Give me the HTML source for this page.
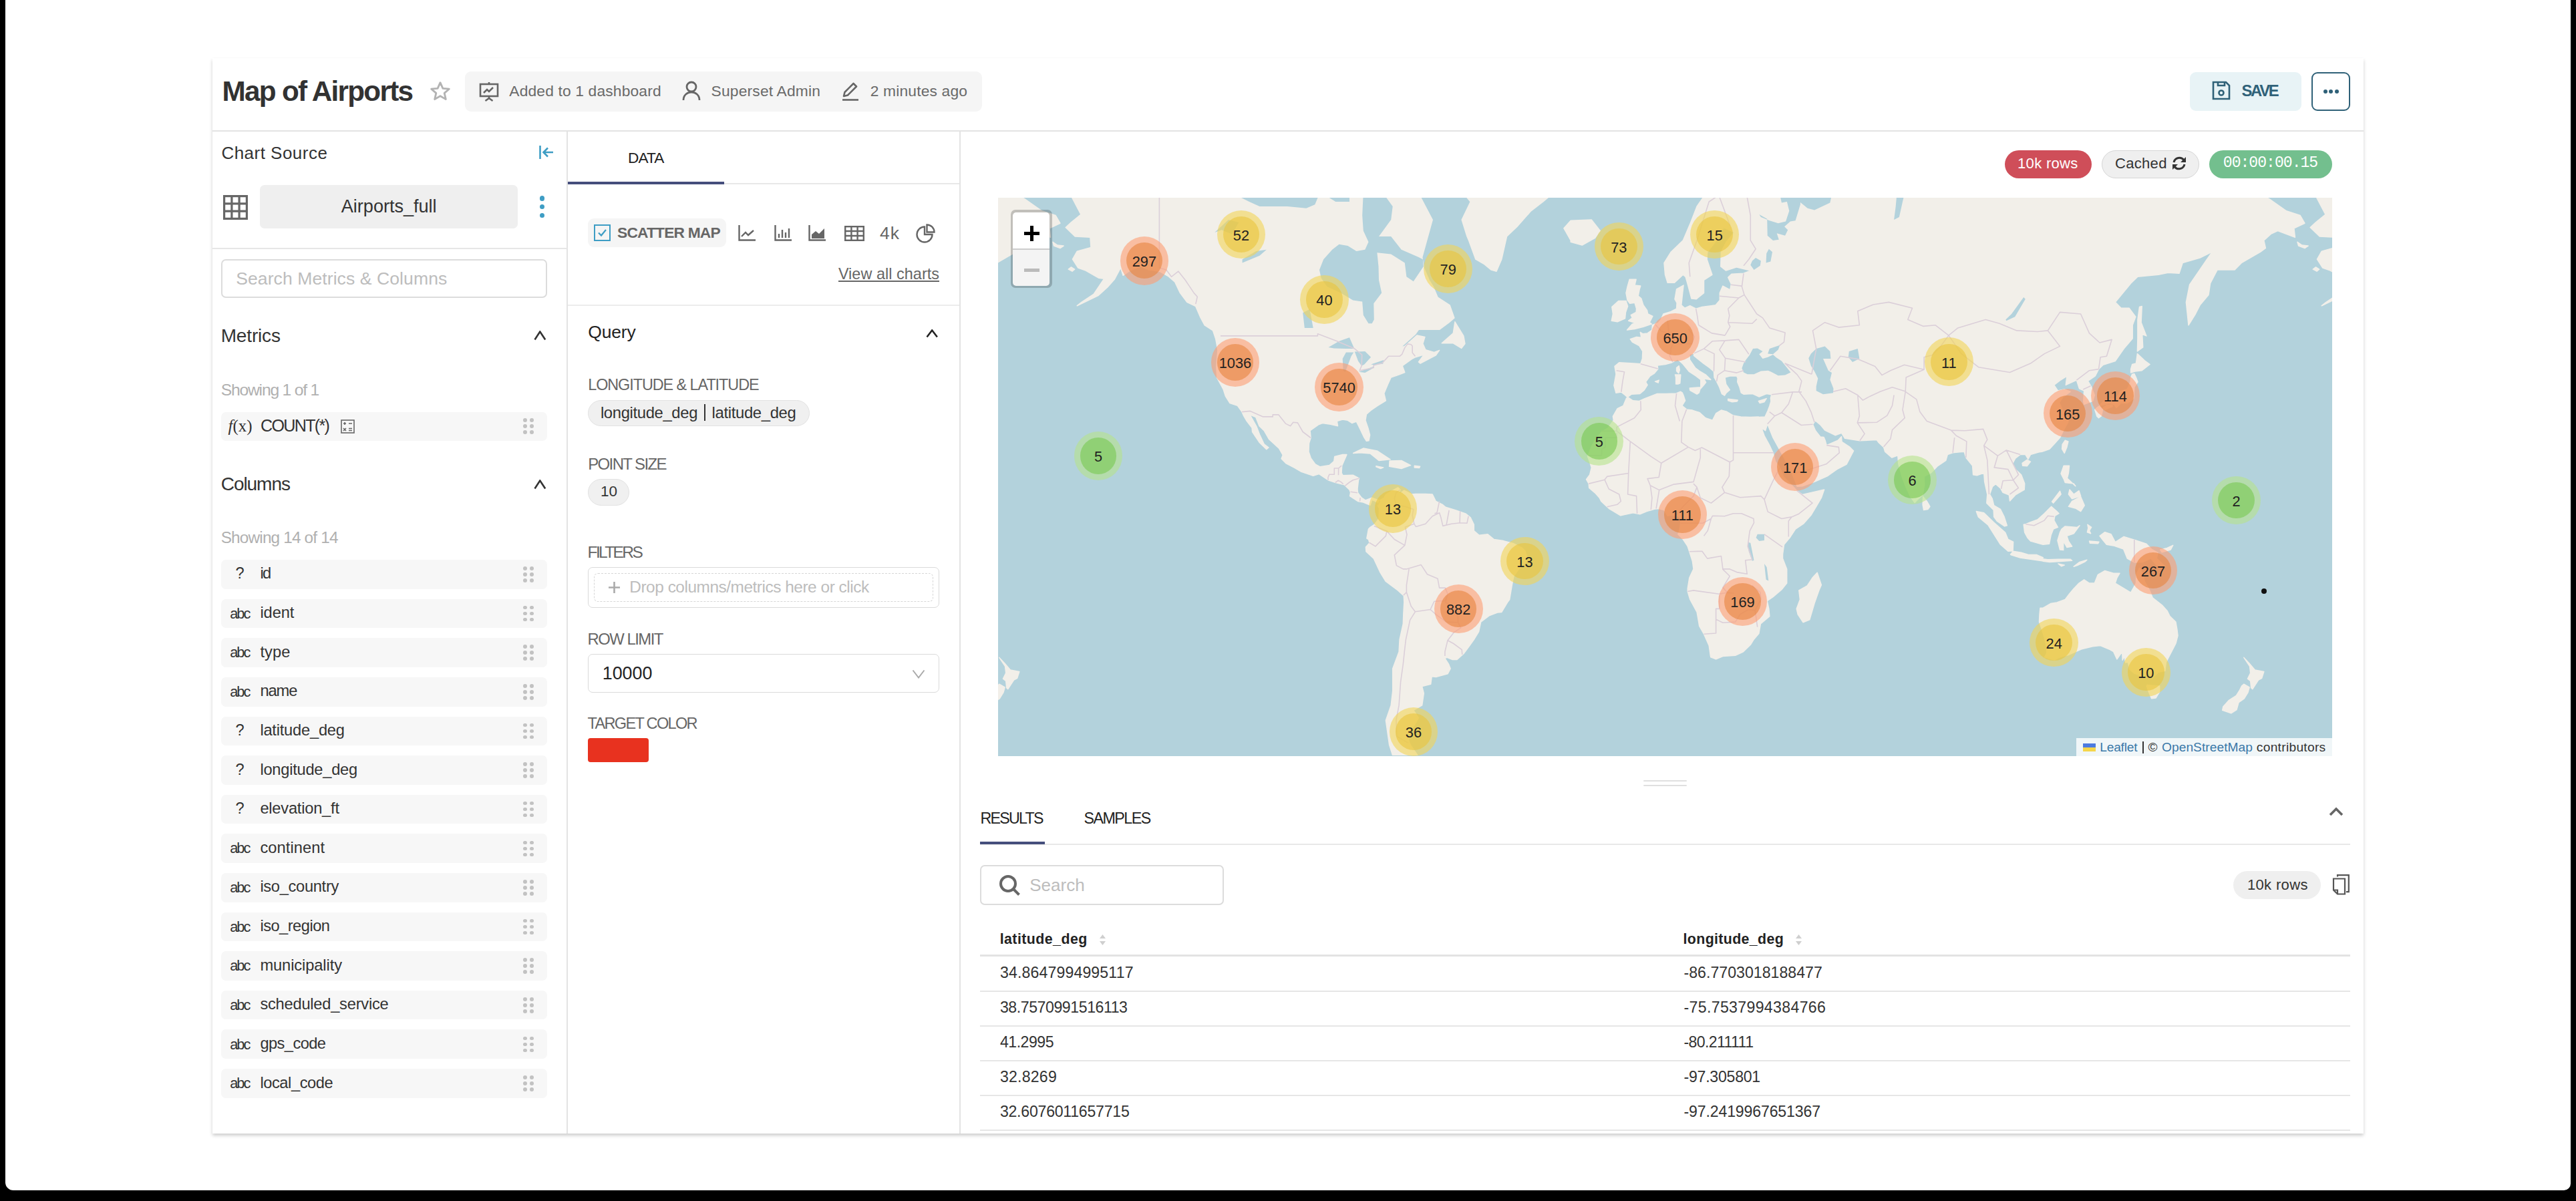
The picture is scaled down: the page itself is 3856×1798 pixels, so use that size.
<!DOCTYPE html><html><head><meta charset="utf-8"><style>
html,body{margin:0;padding:0;width:3856px;height:1798px;overflow:hidden;background:#000}
.r{position:absolute;display:block}
.t{position:absolute;white-space:nowrap;line-height:1;font-family:"Liberation Sans",sans-serif}
</style></head><body>
<div class="r" style="left:0;top:0;width:3856px;height:1798px;background:#000"></div>
<div class="r" style="left:8px;top:0;width:3840px;height:1782px;background:#fff;border-radius:0 0 10px 12px"></div>
<div class="r" style="left:318.0px;top:87.0px;width:3220.0px;height:1610.0px;background:#fff;box-shadow:0 3px 5px rgba(0,0,0,0.2)"></div>
<div class="r" style="left:318.0px;top:195.0px;width:3220.0px;height:2.0px;background:#e3e3e3"></div>
<div class="r" style="left:848.0px;top:196.0px;width:2.0px;height:1501.0px;background:#e3e3e3"></div>
<div class="r" style="left:1436.0px;top:196.0px;width:2.0px;height:1501.0px;background:#e3e3e3"></div>
<svg class="r" style="left:642px;top:120px" width="34" height="34" viewBox="0 0 24 24"><path d="M12 2.6l2.75 6.1 6.65.62-5.03 4.4 1.5 6.5L12 16.8l-5.87 3.42 1.5-6.5-5.03-4.4 6.65-.62z" fill="none" stroke="#b3b3b3" stroke-width="2" stroke-linejoin="round"/></svg>
<div class="r" style="left:695.5px;top:107.0px;width:774.9px;height:59.7px;background:#f5f5f5;border-radius:9px"></div>
<svg class="r" style="left:716px;top:121px" width="32" height="32" viewBox="0 0 32 32"><g fill="none" stroke="#666" stroke-width="2.6"><rect x="3" y="5" width="26" height="18"/><path d="M16 2v3M16 23v3M10.5 30l5.5-4 5.5 4M8 18l5-5 3 3 6-6"/></g></svg>
<svg class="r" style="left:1021px;top:121px" width="28" height="30" viewBox="0 0 28 30"><g fill="none" stroke="#666" stroke-width="2.8"><circle cx="14" cy="9" r="7"/><path d="M2 29c0-7 5-12 12-12s12 5 12 12"/></g></svg>
<svg class="r" style="left:1258px;top:121px" width="30" height="30" viewBox="0 0 30 30"><g fill="none" stroke="#666" stroke-width="2.6" stroke-linejoin="round"><path d="M5 23l1.5-6L19.5 4l4.5 4.5L11 21.5z"/><path d="M3 28.5h24"/></g></svg>
<div class="r" style="left:3278.0px;top:107.6px;width:167.0px;height:58.1px;background:#e8f3f6;border-radius:9px"></div>
<svg class="r" style="left:3311px;top:121px" width="28" height="29" viewBox="0 0 28 29"><g fill="none" stroke="#2f6178" stroke-width="2.6"><path d="M2 2h19l5 5v20H2z"/><path d="M9 2v5h10V2"/><circle cx="14" cy="18" r="3.5"/></g></svg>
<div class="r" style="left:3460.0px;top:108.0px;width:58.0px;height:57.7px;border:2px solid #2f6178;border-radius:9px;box-sizing:border-box"></div>
<div class="r" style="left:3477.5px;top:134px;width:6px;height:6px;border-radius:3px;background:#2f6178"></div>
<div class="r" style="left:3486.2px;top:134px;width:6px;height:6px;border-radius:3px;background:#2f6178"></div>
<div class="r" style="left:3495.0px;top:134px;width:6px;height:6px;border-radius:3px;background:#2f6178"></div>
<svg class="r" style="left:806px;top:217px" width="24" height="22" viewBox="0 0 24 22"><g fill="none" stroke="#3e9dc4" stroke-width="2.6"><path d="M2.5 1v20"/><path d="M22 11H8M14 4.5L7.5 11l6.5 6.5"/></g></svg>
<svg class="r" style="left:334px;top:292px" width="37" height="37" viewBox="0 0 37 37"><g fill="none" stroke="#666" stroke-width="3.2"><rect x="1.6" y="1.6" width="33.8" height="33.8"/><path d="M12.9 1.6v33.8M24.1 1.6v33.8M1.6 12.9h33.8M1.6 24.1h33.8"/></g></svg>
<div class="r" style="left:388.7px;top:277.0px;width:386.3px;height:64.8px;background:#efefef;border-radius:7px"></div>
<div class="r" style="left:807.7px;top:293.0px;width:7.6px;height:7.6px;border-radius:4px;background:#3e9dc4"></div>
<div class="r" style="left:807.7px;top:305.8px;width:7.6px;height:7.6px;border-radius:4px;background:#3e9dc4"></div>
<div class="r" style="left:807.7px;top:318.9px;width:7.6px;height:7.6px;border-radius:4px;background:#3e9dc4"></div>
<div class="r" style="left:318.0px;top:371.0px;width:531.0px;height:2.0px;background:#e6e6e6"></div>
<div class="r" style="left:330.7px;top:387.9px;width:488.0px;height:57.8px;border:2px solid #dcdcdc;border-radius:7px;box-sizing:border-box"></div>
<svg class="r" style="left:798.7px;top:495.0px" width="18.7" height="15.0" viewBox="0 0 18.7 15.0"><path d="M1.5 13.5L9.3 1.5L17.2 13.5" fill="none" stroke="#333" stroke-width="2.6"/></svg>
<div class="r" style="left:330.7px;top:616.6px;width:488.3px;height:43.4px;background:#f7f7f7;border-radius:7px"></div>
<svg class="r" style="left:510px;top:628px" width="21" height="21" viewBox="0 0 21 21"><g fill="none" stroke="#666" stroke-width="1.6"><rect x="1" y="1" width="19" height="19"/><path d="M4 6h4M6 4v4M12 6h5M4 13l4 4M8 13l-4 4M12 13.5h5M12 16.5h5"/></g></svg>
<div class="r" style="left:783.2px;top:626.2px;width:5.6px;height:5.6px;border-radius:3px;background:#c2c2c2"></div><div class="r" style="left:783.2px;top:635.2px;width:5.6px;height:5.6px;border-radius:3px;background:#c2c2c2"></div><div class="r" style="left:783.2px;top:644.2px;width:5.6px;height:5.6px;border-radius:3px;background:#c2c2c2"></div><div class="r" style="left:793.0px;top:626.2px;width:5.6px;height:5.6px;border-radius:3px;background:#c2c2c2"></div><div class="r" style="left:793.0px;top:635.2px;width:5.6px;height:5.6px;border-radius:3px;background:#c2c2c2"></div><div class="r" style="left:793.0px;top:644.2px;width:5.6px;height:5.6px;border-radius:3px;background:#c2c2c2"></div>
<svg class="r" style="left:798.7px;top:718.0px" width="18.7" height="15.0" viewBox="0 0 18.7 15.0"><path d="M1.5 13.5L9.3 1.5L17.2 13.5" fill="none" stroke="#333" stroke-width="2.6"/></svg>
<div class="r" style="left:330.5px;top:838.0px;width:488.3px;height:43.7px;background:#f7f7f7;border-radius:7px"></div>
<div class="r" style="left:783.2px;top:848.2px;width:5.6px;height:5.6px;border-radius:3px;background:#c2c2c2"></div><div class="r" style="left:783.2px;top:857.2px;width:5.6px;height:5.6px;border-radius:3px;background:#c2c2c2"></div><div class="r" style="left:783.2px;top:866.2px;width:5.6px;height:5.6px;border-radius:3px;background:#c2c2c2"></div><div class="r" style="left:793.0px;top:848.2px;width:5.6px;height:5.6px;border-radius:3px;background:#c2c2c2"></div><div class="r" style="left:793.0px;top:857.2px;width:5.6px;height:5.6px;border-radius:3px;background:#c2c2c2"></div><div class="r" style="left:793.0px;top:866.2px;width:5.6px;height:5.6px;border-radius:3px;background:#c2c2c2"></div>
<div class="r" style="left:330.5px;top:896.6px;width:488.3px;height:43.7px;background:#f7f7f7;border-radius:7px"></div>
<div class="r" style="left:783.2px;top:906.8px;width:5.6px;height:5.6px;border-radius:3px;background:#c2c2c2"></div><div class="r" style="left:783.2px;top:915.8px;width:5.6px;height:5.6px;border-radius:3px;background:#c2c2c2"></div><div class="r" style="left:783.2px;top:924.8px;width:5.6px;height:5.6px;border-radius:3px;background:#c2c2c2"></div><div class="r" style="left:793.0px;top:906.8px;width:5.6px;height:5.6px;border-radius:3px;background:#c2c2c2"></div><div class="r" style="left:793.0px;top:915.8px;width:5.6px;height:5.6px;border-radius:3px;background:#c2c2c2"></div><div class="r" style="left:793.0px;top:924.8px;width:5.6px;height:5.6px;border-radius:3px;background:#c2c2c2"></div>
<div class="r" style="left:330.5px;top:955.2px;width:488.3px;height:43.7px;background:#f7f7f7;border-radius:7px"></div>
<div class="r" style="left:783.2px;top:965.4px;width:5.6px;height:5.6px;border-radius:3px;background:#c2c2c2"></div><div class="r" style="left:783.2px;top:974.4px;width:5.6px;height:5.6px;border-radius:3px;background:#c2c2c2"></div><div class="r" style="left:783.2px;top:983.4px;width:5.6px;height:5.6px;border-radius:3px;background:#c2c2c2"></div><div class="r" style="left:793.0px;top:965.4px;width:5.6px;height:5.6px;border-radius:3px;background:#c2c2c2"></div><div class="r" style="left:793.0px;top:974.4px;width:5.6px;height:5.6px;border-radius:3px;background:#c2c2c2"></div><div class="r" style="left:793.0px;top:983.4px;width:5.6px;height:5.6px;border-radius:3px;background:#c2c2c2"></div>
<div class="r" style="left:330.5px;top:1013.9px;width:488.3px;height:43.7px;background:#f7f7f7;border-radius:7px"></div>
<div class="r" style="left:783.2px;top:1024.1px;width:5.6px;height:5.6px;border-radius:3px;background:#c2c2c2"></div><div class="r" style="left:783.2px;top:1033.1px;width:5.6px;height:5.6px;border-radius:3px;background:#c2c2c2"></div><div class="r" style="left:783.2px;top:1042.1px;width:5.6px;height:5.6px;border-radius:3px;background:#c2c2c2"></div><div class="r" style="left:793.0px;top:1024.1px;width:5.6px;height:5.6px;border-radius:3px;background:#c2c2c2"></div><div class="r" style="left:793.0px;top:1033.1px;width:5.6px;height:5.6px;border-radius:3px;background:#c2c2c2"></div><div class="r" style="left:793.0px;top:1042.1px;width:5.6px;height:5.6px;border-radius:3px;background:#c2c2c2"></div>
<div class="r" style="left:330.5px;top:1072.5px;width:488.3px;height:43.7px;background:#f7f7f7;border-radius:7px"></div>
<div class="r" style="left:783.2px;top:1082.7px;width:5.6px;height:5.6px;border-radius:3px;background:#c2c2c2"></div><div class="r" style="left:783.2px;top:1091.7px;width:5.6px;height:5.6px;border-radius:3px;background:#c2c2c2"></div><div class="r" style="left:783.2px;top:1100.7px;width:5.6px;height:5.6px;border-radius:3px;background:#c2c2c2"></div><div class="r" style="left:793.0px;top:1082.7px;width:5.6px;height:5.6px;border-radius:3px;background:#c2c2c2"></div><div class="r" style="left:793.0px;top:1091.7px;width:5.6px;height:5.6px;border-radius:3px;background:#c2c2c2"></div><div class="r" style="left:793.0px;top:1100.7px;width:5.6px;height:5.6px;border-radius:3px;background:#c2c2c2"></div>
<div class="r" style="left:330.5px;top:1131.1px;width:488.3px;height:43.7px;background:#f7f7f7;border-radius:7px"></div>
<div class="r" style="left:783.2px;top:1141.3px;width:5.6px;height:5.6px;border-radius:3px;background:#c2c2c2"></div><div class="r" style="left:783.2px;top:1150.3px;width:5.6px;height:5.6px;border-radius:3px;background:#c2c2c2"></div><div class="r" style="left:783.2px;top:1159.3px;width:5.6px;height:5.6px;border-radius:3px;background:#c2c2c2"></div><div class="r" style="left:793.0px;top:1141.3px;width:5.6px;height:5.6px;border-radius:3px;background:#c2c2c2"></div><div class="r" style="left:793.0px;top:1150.3px;width:5.6px;height:5.6px;border-radius:3px;background:#c2c2c2"></div><div class="r" style="left:793.0px;top:1159.3px;width:5.6px;height:5.6px;border-radius:3px;background:#c2c2c2"></div>
<div class="r" style="left:330.5px;top:1189.7px;width:488.3px;height:43.7px;background:#f7f7f7;border-radius:7px"></div>
<div class="r" style="left:783.2px;top:1199.9px;width:5.6px;height:5.6px;border-radius:3px;background:#c2c2c2"></div><div class="r" style="left:783.2px;top:1208.9px;width:5.6px;height:5.6px;border-radius:3px;background:#c2c2c2"></div><div class="r" style="left:783.2px;top:1217.9px;width:5.6px;height:5.6px;border-radius:3px;background:#c2c2c2"></div><div class="r" style="left:793.0px;top:1199.9px;width:5.6px;height:5.6px;border-radius:3px;background:#c2c2c2"></div><div class="r" style="left:793.0px;top:1208.9px;width:5.6px;height:5.6px;border-radius:3px;background:#c2c2c2"></div><div class="r" style="left:793.0px;top:1217.9px;width:5.6px;height:5.6px;border-radius:3px;background:#c2c2c2"></div>
<div class="r" style="left:330.5px;top:1248.3px;width:488.3px;height:43.7px;background:#f7f7f7;border-radius:7px"></div>
<div class="r" style="left:783.2px;top:1258.5px;width:5.6px;height:5.6px;border-radius:3px;background:#c2c2c2"></div><div class="r" style="left:783.2px;top:1267.5px;width:5.6px;height:5.6px;border-radius:3px;background:#c2c2c2"></div><div class="r" style="left:783.2px;top:1276.5px;width:5.6px;height:5.6px;border-radius:3px;background:#c2c2c2"></div><div class="r" style="left:793.0px;top:1258.5px;width:5.6px;height:5.6px;border-radius:3px;background:#c2c2c2"></div><div class="r" style="left:793.0px;top:1267.5px;width:5.6px;height:5.6px;border-radius:3px;background:#c2c2c2"></div><div class="r" style="left:793.0px;top:1276.5px;width:5.6px;height:5.6px;border-radius:3px;background:#c2c2c2"></div>
<div class="r" style="left:330.5px;top:1307.0px;width:488.3px;height:43.7px;background:#f7f7f7;border-radius:7px"></div>
<div class="r" style="left:783.2px;top:1317.2px;width:5.6px;height:5.6px;border-radius:3px;background:#c2c2c2"></div><div class="r" style="left:783.2px;top:1326.2px;width:5.6px;height:5.6px;border-radius:3px;background:#c2c2c2"></div><div class="r" style="left:783.2px;top:1335.2px;width:5.6px;height:5.6px;border-radius:3px;background:#c2c2c2"></div><div class="r" style="left:793.0px;top:1317.2px;width:5.6px;height:5.6px;border-radius:3px;background:#c2c2c2"></div><div class="r" style="left:793.0px;top:1326.2px;width:5.6px;height:5.6px;border-radius:3px;background:#c2c2c2"></div><div class="r" style="left:793.0px;top:1335.2px;width:5.6px;height:5.6px;border-radius:3px;background:#c2c2c2"></div>
<div class="r" style="left:330.5px;top:1365.6px;width:488.3px;height:43.7px;background:#f7f7f7;border-radius:7px"></div>
<div class="r" style="left:783.2px;top:1375.8px;width:5.6px;height:5.6px;border-radius:3px;background:#c2c2c2"></div><div class="r" style="left:783.2px;top:1384.8px;width:5.6px;height:5.6px;border-radius:3px;background:#c2c2c2"></div><div class="r" style="left:783.2px;top:1393.8px;width:5.6px;height:5.6px;border-radius:3px;background:#c2c2c2"></div><div class="r" style="left:793.0px;top:1375.8px;width:5.6px;height:5.6px;border-radius:3px;background:#c2c2c2"></div><div class="r" style="left:793.0px;top:1384.8px;width:5.6px;height:5.6px;border-radius:3px;background:#c2c2c2"></div><div class="r" style="left:793.0px;top:1393.8px;width:5.6px;height:5.6px;border-radius:3px;background:#c2c2c2"></div>
<div class="r" style="left:330.5px;top:1424.2px;width:488.3px;height:43.7px;background:#f7f7f7;border-radius:7px"></div>
<div class="r" style="left:783.2px;top:1434.4px;width:5.6px;height:5.6px;border-radius:3px;background:#c2c2c2"></div><div class="r" style="left:783.2px;top:1443.4px;width:5.6px;height:5.6px;border-radius:3px;background:#c2c2c2"></div><div class="r" style="left:783.2px;top:1452.4px;width:5.6px;height:5.6px;border-radius:3px;background:#c2c2c2"></div><div class="r" style="left:793.0px;top:1434.4px;width:5.6px;height:5.6px;border-radius:3px;background:#c2c2c2"></div><div class="r" style="left:793.0px;top:1443.4px;width:5.6px;height:5.6px;border-radius:3px;background:#c2c2c2"></div><div class="r" style="left:793.0px;top:1452.4px;width:5.6px;height:5.6px;border-radius:3px;background:#c2c2c2"></div>
<div class="r" style="left:330.5px;top:1482.8px;width:488.3px;height:43.7px;background:#f7f7f7;border-radius:7px"></div>
<div class="r" style="left:783.2px;top:1493.0px;width:5.6px;height:5.6px;border-radius:3px;background:#c2c2c2"></div><div class="r" style="left:783.2px;top:1502.0px;width:5.6px;height:5.6px;border-radius:3px;background:#c2c2c2"></div><div class="r" style="left:783.2px;top:1511.0px;width:5.6px;height:5.6px;border-radius:3px;background:#c2c2c2"></div><div class="r" style="left:793.0px;top:1493.0px;width:5.6px;height:5.6px;border-radius:3px;background:#c2c2c2"></div><div class="r" style="left:793.0px;top:1502.0px;width:5.6px;height:5.6px;border-radius:3px;background:#c2c2c2"></div><div class="r" style="left:793.0px;top:1511.0px;width:5.6px;height:5.6px;border-radius:3px;background:#c2c2c2"></div>
<div class="r" style="left:330.5px;top:1541.4px;width:488.3px;height:43.7px;background:#f7f7f7;border-radius:7px"></div>
<div class="r" style="left:783.2px;top:1551.6px;width:5.6px;height:5.6px;border-radius:3px;background:#c2c2c2"></div><div class="r" style="left:783.2px;top:1560.6px;width:5.6px;height:5.6px;border-radius:3px;background:#c2c2c2"></div><div class="r" style="left:783.2px;top:1569.6px;width:5.6px;height:5.6px;border-radius:3px;background:#c2c2c2"></div><div class="r" style="left:793.0px;top:1551.6px;width:5.6px;height:5.6px;border-radius:3px;background:#c2c2c2"></div><div class="r" style="left:793.0px;top:1560.6px;width:5.6px;height:5.6px;border-radius:3px;background:#c2c2c2"></div><div class="r" style="left:793.0px;top:1569.6px;width:5.6px;height:5.6px;border-radius:3px;background:#c2c2c2"></div>
<div class="r" style="left:330.5px;top:1600.1px;width:488.3px;height:43.7px;background:#f7f7f7;border-radius:7px"></div>
<div class="r" style="left:783.2px;top:1610.3px;width:5.6px;height:5.6px;border-radius:3px;background:#c2c2c2"></div><div class="r" style="left:783.2px;top:1619.3px;width:5.6px;height:5.6px;border-radius:3px;background:#c2c2c2"></div><div class="r" style="left:783.2px;top:1628.3px;width:5.6px;height:5.6px;border-radius:3px;background:#c2c2c2"></div><div class="r" style="left:793.0px;top:1610.3px;width:5.6px;height:5.6px;border-radius:3px;background:#c2c2c2"></div><div class="r" style="left:793.0px;top:1619.3px;width:5.6px;height:5.6px;border-radius:3px;background:#c2c2c2"></div><div class="r" style="left:793.0px;top:1628.3px;width:5.6px;height:5.6px;border-radius:3px;background:#c2c2c2"></div>
<div class="r" style="left:850.0px;top:274.0px;width:586.0px;height:2.0px;background:#e8e8e8"></div>
<div class="r" style="left:850.0px;top:271.5px;width:234.0px;height:4.3px;background:#454e7c"></div>
<div class="r" style="left:879.8px;top:326.9px;width:206.9px;height:43.5px;background:#f5f5f5;border-radius:9px"></div>
<div class="r" style="left:888.5px;top:336.3px;width:25.4px;height:24.7px;border:2.2px solid #3e9dc4;box-sizing:border-box"></div>
<svg class="r" style="left:888.5px;top:336.3px" width="25.4" height="24.7" viewBox="0 0 25.4 24.7"><path d="M7 12.5l4 4 7-8.5" fill="none" stroke="#3e9dc4" stroke-width="2.2"/></svg>
<svg class="r" style="left:1105px;top:337px" width="27" height="24" viewBox="0 0 27 24"><g fill="none" stroke="#666" stroke-width="2.4"><path d="M1.5 0v22.5H26"/><path d="M5 17l6-6 4 4 8-7"/></g></svg>
<svg class="r" style="left:1159px;top:337px" width="27" height="24" viewBox="0 0 27 24"><g fill="none" stroke="#666" stroke-width="2.4"><path d="M1.5 0v22.5H26"/><path d="M7 19v-6M12 19V7M17 19v-8M22 19V5"/></g></svg>
<svg class="r" style="left:1210px;top:337px" width="27" height="24" viewBox="0 0 27 24"><g fill="none" stroke="#666" stroke-width="2.4"><path d="M1.5 0v22.5H26"/></g><path d="M5 20V14l6-5 5 4 8-8v15z" fill="#666"/></svg>
<svg class="r" style="left:1264px;top:338px" width="30" height="23" viewBox="0 0 30 23"><g fill="none" stroke="#666" stroke-width="2.4"><rect x="1.2" y="1.2" width="27.6" height="20.6"/><path d="M1.2 8h27.6M1.2 15h27.6M10.4 1.2v20.6M19.6 1.2v20.6"/></g></svg>
<svg class="r" style="left:1371px;top:335px" width="30" height="29" viewBox="0 0 30 29"><g fill="none" stroke="#666" stroke-width="2.4"><path d="M13 4.5A11.5 11.5 0 1 0 24.5 16H13z"/><path d="M16.5 1.5v11h11A11 11 0 0 0 16.5 1.5z"/></g></svg>
<div class="r" style="left:1254.9px;top:420.4px;width:151.1px;height:2.0px;background:#666"></div>
<div class="r" style="left:850.0px;top:456.0px;width:586.0px;height:2.0px;background:#ececec"></div>
<svg class="r" style="left:1386.3px;top:493.0px" width="18.4" height="13.0" viewBox="0 0 18.4 13.0"><path d="M1.5 11.5L9.2 1.5L16.9 11.5" fill="none" stroke="#222" stroke-width="2.6"/></svg>
<div class="r" style="left:879.6px;top:598.7px;width:332.0px;height:39.6px;background:#f0f0f0;border:1.5px solid #e2e2e2;border-radius:20px;box-sizing:border-box"></div>
<div class="r" style="left:1054.0px;top:604.5px;width:2.3px;height:25.5px;background:#333"></div>
<div class="r" style="left:879.6px;top:716.7px;width:62.3px;height:39.9px;background:#f0f0f0;border:1.5px solid #e2e2e2;border-radius:20px;box-sizing:border-box"></div>
<div class="r" style="left:879.6px;top:849.4px;width:526.2px;height:60.8px;border:1.5px solid #dadada;border-radius:7px;box-sizing:border-box"></div>
<div class="r" style="left:888.7px;top:858.2px;width:508.3px;height:43.2px;border:1.6px dashed #d6d6d6;border-radius:6px;box-sizing:border-box"></div>
<svg class="r" style="left:910px;top:870px" width="19" height="19" viewBox="0 0 19 19"><path d="M9.5 1v17M1 9.5h17" stroke="#aaa" stroke-width="2.6"/></svg>
<div class="r" style="left:879.6px;top:979.4px;width:526.2px;height:57.5px;border:1.5px solid #dadada;border-radius:7px;box-sizing:border-box"></div>
<svg class="r" style="left:1365px;top:1002px" width="20" height="14" viewBox="0 0 20 14"><path d="M1.5 1.5L10 12.5 18.5 1.5" fill="none" stroke="#aaa" stroke-width="2"/></svg>
<div class="r" style="left:879.6px;top:1105.0px;width:91.3px;height:36.4px;background:#e8321f;border-radius:4px"></div>
<div class="r" style="left:3000.7px;top:225.0px;width:130.3px;height:41.7px;background:#cf4e59;border-radius:21px"></div>
<div class="r" style="left:3146.3px;top:225.0px;width:145.7px;height:41.7px;background:#efefef;border:1.5px solid #d6d6d6;border-radius:21px;box-sizing:border-box"></div>
<svg class="r" style="left:3251px;top:234px" width="22" height="21" viewBox="0 0 22 21"><g fill="none" stroke="#333" stroke-width="3"><path d="M3 9A8.5 8.5 0 0 1 18 5.5M19 12A8.5 8.5 0 0 1 4 15.5"/></g><path d="M21 1v8h-8z M1 20v-8h8z" fill="#333"/></svg>
<div class="r" style="left:3307.2px;top:225.0px;width:183.7px;height:41.7px;background:#73bf8e;border-radius:21px"></div>
<div class="r" style="left:1494px;top:296px;width:1997px;height:835.5px;overflow:hidden;background:#b3d2dc"><svg class="r" style="left:0;top:0" width="1997" height="835" viewBox="0 0 1997 835"><path d="M159.7,-36.3L132.8,-20.5L111.0,0.3L124.0,25.1L109.5,36.9L101.2,44.5L115.2,58.0L137.9,59.2L139.0,74.4L118.3,80.1L111.5,92.2L119.8,105.0L131.2,109.1L150.9,120.3L158.6,121.3L143.1,144.4L125.0,156.4L118.3,161.7L133.3,154.6L150.3,146.3L163.8,134.0L174.2,122.3L183.5,105.0L187.1,116.3L197.4,109.1L213.0,102.9L225.9,108.1L241.4,110.2L254.4,117.3L264.7,126.3L272.5,142.6L282.8,156.4L295.8,162.6L302.5,178.3L309.2,190.8L321.6,198.9L325.8,211.6L328.9,228.4L326.8,253.1L327.8,269.7L337.2,287.0L340.3,296.8L347.0,307.6L358.4,311.3L365.1,320.6L367.7,326.7L372.4,334.5L380.1,344.6L380.6,350.5L391.0,366.1L401.8,376.8L405.0,374.0L398.2,368.9L391.5,354.6L386.8,342.3L377.0,324.9L385.8,328.5L391.0,341.7L398.2,348.7L405.5,361.5L420.5,375.1L426.2,385.2L424.1,390.7L431.3,397.9L443.8,404.4L454.1,410.4L471.7,416.3L480.5,413.6L494.0,422.7L505.3,426.5L518.3,429.7L526.0,437.1L527.6,441.3L526.6,446.6L538.5,454.5L546.8,456.0L557.1,460.2L559.7,452.4L567.4,455.5L571.1,457.6L570.6,453.4L559.7,449.2L549.9,452.9L544.2,449.2L538.5,441.8L538.0,436.0L539.5,422.7L540.5,420.1L531.2,415.2L516.2,415.8L514.1,412.0L514.7,401.2L518.3,392.9L521.9,384.6L515.7,384.6L503.8,387.4L502.8,394.6L496.0,400.6L482.1,402.8L474.8,399.0L468.1,389.6L465.0,380.2L465.5,367.8L468.1,359.2L467.1,348.7L479.5,339.9L485.7,337.5L497.6,339.3L508.5,341.7L507.4,334.5L515.7,332.1L523.5,333.3L529.7,337.5L536.4,335.1L542.6,347.6L547.8,358.6L551.4,364.3L555.0,363.8L556.6,355.1L554.0,345.2L549.9,333.3L551.4,324.3L557.6,318.7L567.4,311.9L580.4,303.8L577.8,292.9L583.0,280.4L588.2,269.0L598.5,265.6L608.8,261.5L605.2,251.7L619.2,241.6L624.9,238.7L637.3,235.1L629.5,246.0L632.1,248.1L655.4,235.8L660.6,228.4L652.8,231.4L639.9,227.6L635.8,218.6L638.9,208.5L627.0,206.1L608.8,222.4L602.6,223.9L624.4,204.5L629.5,197.3L660.6,197.3L675.1,186.7L682.9,179.9L676.1,160.8L658.0,149.1L651.3,133.1L645.1,123.3L637.3,105.0L634.7,89.0L650.2,33.0L624.4,-16.0L598.5,-56.3L583.0,-223.8L91.3,-223.8L159.7,-223.8ZM2022.7,-36.3L1995.8,-20.5L1974.0,0.3L1987.0,25.1L1972.5,36.9L1964.2,44.5L1978.2,58.0L2000.9,59.2L2002.0,74.4L1981.3,80.1L1974.5,92.2L1982.8,105.0L1994.2,109.1L2013.9,120.3L2021.6,121.3L2006.1,144.4L1988.0,156.4L1981.3,161.7L1996.3,154.6L2013.3,146.3L2026.8,134.0L2037.1,122.3L2046.5,105.0L2050.1,116.3L2060.4,109.1L2076.0,102.9L2088.9,108.1L2104.4,110.2L2117.4,117.3L2127.7,126.3L2135.5,142.6L2145.8,156.4L2158.8,162.6L2165.5,178.3L2172.2,190.8L2184.6,198.9L2188.8,211.6L2191.9,228.4L2189.8,253.1L2190.8,269.7L2200.2,287.0L2203.3,296.8L2210.0,307.6L2221.4,311.3L2228.1,320.6L2230.7,326.7L2235.4,334.5L2243.1,344.6L2243.6,350.5L2254.0,366.1L2264.8,376.8L2268.0,374.0L2261.2,368.9L2254.5,354.6L2249.8,342.3L2240.0,324.9L2248.8,328.5L2254.0,341.7L2261.2,348.7L2268.5,361.5L2283.5,375.1L2289.2,385.2L2287.1,390.7L2294.3,397.9L2306.8,404.4L2317.1,410.4L2334.7,416.3L2343.5,413.6L2357.0,422.7L2368.3,426.5L2381.3,429.7L2389.1,437.1L2390.6,441.3L2389.6,446.6L2401.5,454.5L2409.8,456.0L2420.1,460.2L2422.7,452.4L2430.4,455.5L2434.1,457.6L2433.6,453.4L2422.7,449.2L2412.9,452.9L2407.2,449.2L2401.5,441.8L2401.0,436.0L2402.5,422.7L2403.5,420.1L2394.2,415.2L2379.2,415.8L2377.1,412.0L2377.7,401.2L2381.3,392.9L2384.9,384.6L2378.7,384.6L2366.8,387.4L2365.8,394.6L2359.0,400.6L2345.1,402.8L2337.8,399.0L2331.1,389.6L2328.0,380.2L2328.5,367.8L2331.1,359.2L2330.1,348.7L2342.5,339.9L2348.7,337.5L2360.6,339.3L2371.5,341.7L2370.4,334.5L2378.7,332.1L2386.5,333.3L2392.7,337.5L2399.4,335.1L2405.6,347.6L2410.8,358.6L2414.4,364.3L2418.0,363.8L2419.6,355.1L2417.0,345.2L2412.9,333.3L2414.4,324.3L2420.6,318.7L2430.4,311.9L2443.4,303.8L2440.8,292.9L2446.0,280.4L2451.1,269.0L2461.5,265.6L2471.8,261.5L2468.2,251.7L2482.2,241.6L2487.9,238.7L2500.3,235.1L2492.6,246.0L2495.1,248.1L2518.4,235.8L2523.6,228.4L2515.8,231.4L2502.9,227.6L2498.8,218.6L2501.9,208.5L2490.0,206.1L2471.8,222.4L2465.6,223.9L2487.4,204.5L2492.6,197.3L2523.6,197.3L2538.1,186.7L2545.9,179.9L2539.1,160.8L2521.0,149.1L2514.3,133.1L2508.1,123.3L2500.3,105.0L2497.7,89.0L2513.2,33.0L2487.4,-16.0L2461.5,-56.3L2446.0,-223.8L1954.3,-223.8L2022.7,-223.8ZM746.0,110.2L753.8,92.2L761.5,58.0L777.0,43.2L797.7,19.8L815.8,6.0L841.7,-16.0L867.6,-102.6L593.3,-169.4L681.3,-47.8L689.1,-16.0L707.2,6.0L694.2,33.0L702.0,58.0L704.6,63.9L714.9,92.2L727.9,99.7L738.2,108.1ZM857.2,63.9L846.9,45.7L857.2,34.3L888.3,33.0L901.2,49.5L893.5,60.4L874.3,71.0L857.2,66.3ZM571.1,453.4L577.8,449.2L580.4,444.5L587.1,440.3L598.5,433.9L602.1,437.1L600.1,444.0L607.8,438.2L619.2,444.0L624.9,443.4L639.9,443.4L650.2,444.0L655.4,454.5L665.8,459.7L669.9,463.3L685.4,468.0L700.4,473.2L707.2,478.9L712.3,489.3L712.3,498.6L720.1,505.3L733.0,503.8L742.4,511.5L756.3,513.6L771.9,517.8L784.8,524.5L788.9,528.7L791.0,535.4L790.0,545.4L779.6,555.9L771.9,566.5L769.3,579.8L765.7,601.5L762.5,605.9L753.8,620.4L747.5,621.0L735.6,625.5L722.7,635.1L719.6,649.6L712.3,661.5L704.6,672.3L696.8,682.8L687.0,691.5L680.3,691.5L672.0,688.4L668.9,689.6L674.6,698.5L677.2,705.0L673.0,712.8L655.4,717.4L649.2,716.8L647.7,728.2L634.7,731.6L637.3,742.0L634.7,759.9L621.8,767.3L629.5,778.6L620.2,794.3L614.0,810.5L617.1,818.9L632.1,840.8L624.4,859.4L598.5,859.4L585.6,818.9L580.4,782.5L588.2,759.9L590.7,738.5L590.7,718.1L590.7,705.0L600.1,679.7L601.1,661.5L606.3,638.0L606.8,624.3L607.8,605.4L607.3,596.0L598.5,587.9L580.4,574.5L572.1,561.2L562.3,540.1L550.9,529.7L550.4,522.9L556.1,516.7L554.5,511.5L551.9,510.0L554.5,496.0L557.1,493.4L563.3,489.3L570.0,480.5L570.6,464.9L568.0,460.7ZM940.6,300.0L935.9,311.3L927.1,315.7L920.4,327.3L921.4,333.3L913.1,344.6L903.8,350.5L896.1,359.2L888.3,372.3L882.6,387.4L885.7,395.7L888.3,403.9L885.7,414.7L880.5,421.7L884.2,428.1L884.7,434.5L893.5,441.8L900.2,449.2L902.8,454.5L911.6,462.8L915.2,465.9L931.8,475.8L950.4,471.7L960.8,473.7L971.1,469.6L984.0,465.9L988.7,465.4L997.0,467.5L1002.2,476.3L1009.9,475.3L1015.1,475.3L1020.3,478.4L1021.8,485.7L1020.8,493.4L1019.2,501.2L1017.7,503.8L1025.4,511.5L1032.2,521.9L1034.8,529.7L1039.4,544.3L1041.0,555.9L1034.8,569.1L1032.2,585.2L1032.2,589.5L1035.8,601.5L1046.1,620.4L1049.8,641.5L1056.5,653.2L1064.2,670.5L1066.3,685.3L1066.8,687.8L1074.6,690.9L1084.9,686.5L1103.6,685.3L1115.5,679.7L1126.3,669.3L1131.5,660.9L1138.8,652.6L1141.4,638.0L1154.8,626.6L1153.8,615.4L1151.2,603.7L1160.0,597.7L1172.9,586.8L1180.7,577.1L1180.7,555.9L1174.5,540.1L1174.5,533.9L1176.5,519.3L1185.9,507.9L1193.6,496.0L1205.5,488.2L1216.9,475.3L1224.7,462.3L1232.4,449.2L1236.6,437.1L1224.7,439.7L1204.0,444.5L1195.2,438.2L1191.0,433.4L1183.3,425.4L1175.5,417.4L1170.3,403.9L1163.6,395.1L1160.0,381.8L1154.8,370.6L1147.0,356.3L1139.8,336.3L1138.3,327.9L1125.8,328.5L1111.9,327.9L1100.5,326.1L1090.1,320.0L1082.4,318.1L1074.6,323.0L1069.4,333.3L1059.1,329.7L1050.3,321.8L1039.4,318.1L1030.6,316.9L1023.9,311.3L1028.5,303.8L1026.0,296.1L1024.4,292.2L1021.8,290.3L1015.1,292.9L999.6,293.5L986.6,293.5L968.0,300.6L959.7,304.4L950.4,303.8L943.7,299.3ZM-758.4,-33.1L-798.8,-12.9L-816.9,12.9L-827.2,39.4L-837.6,63.9L-855.7,81.2L-866.0,97.6L-864.5,115.3L-860.9,127.2L-850.5,127.2L-837.6,115.3L-833.9,118.3L-830.3,131.1L-825.1,150.9L-817.9,151.8L-806.5,142.6L-806.5,123.3L-794.1,115.3L-801.9,92.2L-801.3,81.2L-783.2,58.0L-777.0,44.5L-761.0,51.9L-772.9,66.3L-780.6,81.2L-781.2,102.9L-773.4,109.1L-757.4,103.9L-736.7,109.1L-747.0,113.3L-765.1,114.3L-770.3,119.3L-765.6,129.2L-767.2,137.8L-778.0,132.1L-782.7,142.6L-782.7,153.6L-788.9,160.8L-795.6,161.7L-809.1,163.5L-818.4,166.2L-827.2,161.7L-835.0,165.3L-840.2,160.8L-838.6,145.4L-837.0,131.1L-847.4,136.9L-850.0,151.8L-846.9,157.3L-847.4,166.2L-855.7,170.5L-867.1,174.0L-871.2,183.3L-874.8,187.5L-883.6,190.8L-884.1,198.1L-890.9,202.9L-898.1,203.7L-901.7,201.3L-900.2,209.3L-907.4,208.5L-916.7,211.6L-913.6,216.2L-903.3,221.6L-898.1,229.9L-898.6,240.9L-901.2,248.8L-911.6,248.1L-933.3,246.7L-940.0,252.4L-938.0,264.2L-941.1,281.1L-938.0,292.2L-930.2,290.9L-924.5,295.5L-920.9,298.7L-914.7,294.2L-902.2,293.5L-896.0,288.3L-890.9,280.4L-893.5,275.8L-887.2,267.0L-880.5,262.8L-875.3,256.6L-875.9,250.9L-864.0,249.5L-854.1,246.7L-845.8,241.6L-838.6,248.1L-828.8,260.1L-818.4,267.0L-811.2,272.4L-811.2,285.7L-806.0,279.8L-803.4,276.4L-806.5,271.0L-796.2,272.4L-803.9,264.9L-813.2,259.4L-819.5,254.5L-827.7,242.4L-828.2,234.3L-821.0,232.9L-821.5,236.5L-813.2,243.1L-807.0,248.1L-798.2,254.5L-791.5,260.1L-791.0,269.0L-787.4,275.1L-783.2,283.7L-779.6,293.5L-775.5,296.1L-772.9,292.2L-767.7,287.7L-773.4,279.1L-774.9,269.0L-767.7,267.0L-757.4,267.0L-755.8,270.4L-756.3,275.8L-753.2,283.1L-750.6,292.2L-747.0,294.2L-733.5,293.5L-723.7,298.0L-712.8,293.5L-705.1,294.8L-706.6,300.0L-706.1,305.0L-708.2,311.9L-710.8,318.7L-714.9,327.9L-724.7,328.5L-723.7,336.3L-720.1,344.6L-714.4,348.7L-711.3,338.7L-703.0,359.2L-689.0,384.6L-677.1,406.6L-670.4,422.7L-666.8,432.3L-659.0,431.8L-640.9,425.4L-621.8,416.9L-607.3,406.6L-592.8,399.0L-582.4,379.0L-588.6,372.9L-600.0,365.5L-600.5,357.4L-605.7,363.2L-622.8,370.6L-624.9,363.2L-626.9,358.6L-632.1,358.0L-639.4,348.7L-643.5,339.3L-639.4,333.9L-631.6,340.5L-625.4,348.1L-609.9,355.7L-600.5,352.2L-595.4,360.3L-573.1,363.8L-547.8,362.6L-545.2,366.1L-537.4,373.4L-535.3,380.2L-525.0,389.1L-516.2,385.7L-515.2,398.4L-510.0,417.4L-504.8,431.3L-497.6,447.1L-490.8,456.5L-487.2,452.4L-478.9,445.0L-476.3,430.2L-476.9,417.4L-466.0,411.5L-457.2,402.2L-444.3,393.5L-441.7,384.6L-433.9,381.8L-423.6,380.7L-416.8,380.2L-414.2,389.1L-404.4,401.2L-403.4,414.7L-397.7,415.8L-387.3,412.0L-386.3,425.4L-382.2,444.0L-383.2,457.1L-372.8,467.5L-372.3,477.9L-367.7,484.1L-356.3,491.9L-352.7,490.8L-356.8,477.9L-362.5,466.5L-372.3,460.7L-374.9,450.3L-378.5,444.0L-374.4,432.3L-369.7,428.6L-362.5,435.0L-358.9,441.3L-349.6,445.0L-348.5,453.9L-339.7,444.5L-326.8,437.1L-326.3,428.1L-331.4,414.7L-340.2,406.6L-344.9,399.0L-340.2,390.2L-333.0,384.6L-325.2,384.6L-321.1,391.3L-317.5,384.6L-304.5,380.7L-300.4,380.2L-289.0,376.2L-281.2,367.8L-273.5,359.2L-267.8,347.6L-261.1,335.7L-261.6,327.9L-268.3,320.6L-274.5,306.9L-269.3,298.7L-258.0,290.3L-266.8,287.0L-276.6,289.0L-282.3,280.4L-273.5,273.7L-263.1,267.0L-264.7,280.4L-248.6,273.1L-244.5,285.7L-237.3,289.0L-238.3,305.0L-237.3,309.4L-224.3,304.4L-221.7,295.5L-226.9,282.4L-231.6,274.4L-220.7,267.0L-215.5,256.6L-208.8,250.2L-190.7,244.5L-177.8,226.1L-164.8,210.8L-164.8,190.8L-160.2,178.3L-170.0,165.3L-181.9,165.3L-190.7,156.4L-167.4,128.2L-157.0,118.3L-126.0,115.3L-111.5,112.2L-95.0,113.3L-89.8,97.6L-63.9,90.0L-45.8,81.2L-79.4,130.2L-84.6,156.4L-81.0,190.8L-70.6,174.0L-63.9,160.8L-51.0,145.4L-48.4,128.2L-38.0,108.1L-12.2,108.1L-1.8,97.6L26.7,81.2L34.4,75.5L31.8,63.9L42.2,54.4L52.5,49.5L78.4,59.2L76.9,45.7L92.9,38.2L86.2,26.5L65.5,19.8L39.6,1.7L13.7,-12.9L-12.2,-16.0L-63.9,-12.9L-115.7,-31.5L-167.4,-47.8L-374.4,-145.4L-503.8,-47.8L-547.8,-16.0L-684.9,-16.0L-721.1,-16.0L-736.7,-23.6ZM1104.6,-33.1L1064.2,-12.9L1046.1,12.9L1035.8,39.4L1025.4,63.9L1007.3,81.2L997.0,97.6L998.5,115.3L1002.2,127.2L1012.5,127.2L1025.4,115.3L1029.1,118.3L1032.7,131.1L1037.9,150.9L1045.1,151.8L1056.5,142.6L1056.5,123.3L1068.9,115.3L1061.1,92.2L1061.7,81.2L1079.8,58.0L1086.0,44.5L1102.0,51.9L1090.1,66.3L1082.4,81.2L1081.8,102.9L1089.6,109.1L1105.7,103.9L1126.3,109.1L1116.0,113.3L1097.9,114.3L1092.7,119.3L1097.4,129.2L1095.8,137.8L1084.9,132.1L1080.3,142.6L1080.3,153.6L1074.1,160.8L1067.4,161.7L1053.9,163.5L1044.6,166.2L1035.8,161.7L1028.0,165.3L1022.8,160.8L1024.4,145.4L1026.0,131.1L1015.6,136.9L1013.0,151.8L1016.1,157.3L1015.6,166.2L1007.3,170.5L995.9,174.0L991.8,183.3L988.2,187.5L979.4,190.8L978.9,198.1L972.1,202.9L964.9,203.7L961.3,201.3L962.8,209.3L955.6,208.5L946.3,211.6L949.4,216.2L959.7,221.6L964.9,229.9L964.4,240.9L961.8,248.8L951.4,248.1L929.7,246.7L923.0,252.4L925.0,264.2L921.9,281.1L925.0,292.2L932.8,290.9L938.5,295.5L942.1,298.7L948.3,294.2L960.8,293.5L967.0,288.3L972.1,280.4L969.5,275.8L975.8,267.0L982.5,262.8L987.7,256.6L987.1,250.9L999.0,249.5L1008.9,246.7L1017.2,241.6L1024.4,248.1L1034.2,260.1L1044.6,267.0L1051.8,272.4L1051.8,285.7L1057.0,279.8L1059.6,276.4L1056.5,271.0L1066.8,272.4L1059.1,264.9L1049.8,259.4L1043.5,254.5L1035.3,242.4L1034.8,234.3L1042.0,232.9L1041.5,236.5L1049.8,243.1L1056.0,248.1L1064.8,254.5L1071.5,260.1L1072.0,269.0L1075.6,275.1L1079.8,283.7L1083.4,293.5L1087.5,296.1L1090.1,292.2L1095.3,287.7L1089.6,279.1L1088.1,269.0L1095.3,267.0L1105.7,267.0L1107.2,270.4L1106.7,275.8L1109.8,283.1L1112.4,292.2L1116.0,294.2L1129.5,293.5L1139.3,298.0L1150.2,293.5L1157.9,294.8L1156.4,300.0L1156.9,305.0L1154.8,311.9L1152.2,318.7L1148.1,327.9L1138.3,328.5L1139.3,336.3L1142.9,344.6L1148.6,348.7L1151.7,338.7L1160.0,359.2L1174.0,384.6L1185.9,406.6L1192.6,422.7L1196.2,432.3L1204.0,431.8L1222.1,425.4L1241.2,416.9L1255.7,406.6L1270.2,399.0L1280.6,379.0L1274.4,372.9L1263.0,365.5L1262.5,357.4L1257.3,363.2L1240.2,370.6L1238.1,363.2L1236.1,358.6L1230.9,358.0L1223.6,348.7L1219.5,339.3L1223.6,333.9L1231.4,340.5L1237.6,348.1L1253.1,355.7L1262.5,352.2L1267.6,360.3L1289.9,363.8L1315.2,362.6L1317.8,366.1L1325.6,373.4L1327.7,380.2L1338.0,389.1L1346.8,385.7L1347.8,398.4L1353.0,417.4L1358.2,431.3L1365.4,447.1L1372.2,456.5L1375.8,452.4L1384.1,445.0L1386.7,430.2L1386.1,417.4L1397.0,411.5L1405.8,402.2L1418.7,393.5L1421.3,384.6L1429.1,381.8L1439.4,380.7L1446.2,380.2L1448.8,389.1L1458.6,401.2L1459.6,414.7L1465.3,415.8L1475.7,412.0L1476.7,425.4L1480.8,444.0L1479.8,457.1L1490.2,467.5L1490.7,477.9L1495.3,484.1L1506.7,491.9L1510.3,490.8L1506.2,477.9L1500.5,466.5L1490.7,460.7L1488.1,450.3L1484.5,444.0L1488.6,432.3L1493.3,428.6L1500.5,435.0L1504.1,441.3L1513.4,445.0L1514.5,453.9L1523.3,444.5L1536.2,437.1L1536.7,428.1L1531.6,414.7L1522.8,406.6L1518.1,399.0L1522.8,390.2L1530.0,384.6L1537.8,384.6L1541.9,391.3L1545.5,384.6L1558.5,380.7L1562.6,380.2L1574.0,376.2L1581.8,367.8L1589.5,359.2L1595.2,347.6L1601.9,335.7L1601.4,327.9L1594.7,320.6L1588.5,306.9L1593.7,298.7L1605.0,290.3L1596.2,287.0L1586.4,289.0L1580.7,280.4L1589.5,273.7L1599.9,267.0L1598.3,280.4L1614.4,273.1L1618.5,285.7L1625.7,289.0L1624.7,305.0L1625.7,309.4L1638.7,304.4L1641.3,295.5L1636.1,282.4L1631.4,274.4L1642.3,267.0L1647.5,256.6L1654.2,250.2L1672.3,244.5L1685.2,226.1L1698.2,210.8L1698.2,190.8L1702.8,178.3L1693.0,165.3L1681.1,165.3L1672.3,156.4L1695.6,128.2L1705.9,118.3L1737.0,115.3L1751.5,112.2L1768.0,113.3L1773.2,97.6L1799.1,90.0L1817.2,81.2L1783.6,130.2L1778.4,156.4L1782.0,190.8L1792.4,174.0L1799.1,160.8L1812.0,145.4L1814.6,128.2L1825.0,108.1L1850.8,108.1L1861.2,97.6L1889.7,81.2L1897.4,75.5L1894.8,63.9L1905.2,54.4L1915.5,49.5L1941.4,59.2L1939.9,45.7L1955.9,38.2L1949.2,26.5L1928.5,19.8L1902.6,1.7L1876.7,-12.9L1850.8,-16.0L1799.1,-12.9L1747.3,-31.5L1695.6,-47.8L1488.6,-145.4L1359.2,-47.8L1315.2,-16.0L1178.1,-16.0L1141.9,-16.0L1126.3,-23.6ZM941.6,198.1L953.0,196.5L965.9,193.2L978.3,189.1L975.2,186.7L979.9,177.4L972.7,174.0L971.6,168.8L965.9,160.8L962.8,150.9L958.2,147.2L960.2,136.9L961.8,132.1L953.0,131.1L955.1,122.3L945.2,122.3L942.1,133.1L940.0,142.6L942.1,153.6L945.7,158.2L953.0,157.3L955.6,166.2L955.1,171.4L947.3,175.7L949.4,179.9L943.7,184.2L954.0,187.5L949.4,189.1ZM940.0,154.6L942.6,162.6L939.5,171.4L938.5,180.8L927.1,185.8L918.3,184.2L920.4,174.0L918.8,163.5L928.7,154.6ZM1560.0,614.2L1564.2,614.2L1575.5,607.6L1584.9,605.9L1597.3,601.5L1603.5,593.3L1610.2,585.2L1618.0,577.1L1625.7,571.8L1633.5,577.1L1641.3,577.1L1646.4,564.3L1648.0,563.3L1656.8,558.5L1669.7,562.2L1679.0,562.2L1674.9,569.1L1672.3,577.1L1695.6,591.1L1703.4,577.1L1703.9,563.8L1708.5,554.3L1713.7,563.8L1716.3,574.5L1723.5,587.4L1728.2,598.8L1742.2,609.8L1749.9,618.2L1754.1,626.6L1762.9,635.1L1764.9,646.7L1766.0,655.5L1762.9,667.5L1753.6,685.3L1748.4,695.3L1746.8,708.2L1737.0,710.2L1728.2,718.8L1721.0,710.8L1713.7,716.8L1700.8,712.1L1694.0,706.3L1691.5,695.3L1687.8,696.0L1685.8,686.5L1683.2,692.2L1682.7,679.7L1674.9,690.9L1669.7,679.7L1664.5,676.6L1650.1,670.5L1638.7,671.7L1623.1,675.4L1612.8,679.7L1601.9,684.6L1589.5,687.8L1581.2,692.2L1566.7,687.8L1569.8,681.5L1569.8,673.5L1566.2,658.5L1561.6,643.8L1558.5,635.1L1559.0,623.8ZM1719.9,729.6L1738.6,730.9L1738.6,739.9L1732.9,749.1L1726.6,749.8L1722.5,739.9L1719.4,731.6ZM1.8,688.4L10.1,697.2L18.4,706.9L31.8,709.5L28.7,719.4L23.6,722.1L14.8,735.7L12.7,733.7L11.7,723.5L7.5,720.1L11.7,711.5L10.6,701.7ZM1864.8,688.4L1873.1,697.2L1881.4,706.9L1894.8,709.5L1891.7,719.4L1886.6,722.1L1877.8,735.7L1875.7,733.7L1874.7,723.5L1870.5,720.1L1874.7,711.5L1873.6,701.7ZM1.8,728.2L10.1,733.0L8.0,740.6L2.3,749.8L-5.9,755.6L-9.0,766.6L-17.3,771.8L-30.3,767.3L-29.2,762.1L-20.9,752.7L-9.6,745.5L-4.4,737.1L-1.3,730.9ZM1864.8,728.2L1873.1,733.0L1871.0,740.6L1865.3,749.8L1857.1,755.6L1854.0,766.6L1845.7,771.8L1832.7,767.3L1833.8,762.1L1842.1,752.7L1853.4,745.5L1858.6,737.1L1861.7,730.9ZM1226.2,561.2L1232.4,579.8L1228.8,587.9L1222.1,607.0L1214.8,631.7L1205.0,635.7L1197.2,623.8L1195.2,615.4L1200.4,601.5L1198.8,587.9L1211.2,580.9L1219.0,569.1ZM1384.6,447.6L1390.3,454.5L1394.9,462.3L1391.8,466.5L1385.6,467.5L1384.1,459.7ZM1700.8,263.5L1703.4,269.0L1705.9,275.8L1700.8,283.7L1700.3,292.9L1699.7,300.6L1694.6,305.0L1689.4,307.6L1680.1,307.6L1679.0,309.4L1673.9,314.4L1670.2,309.4L1664.5,307.6L1656.8,309.4L1649.0,311.3L1651.6,307.6L1659.4,301.9L1672.3,300.6L1677.5,295.5L1679.6,290.3L1690.4,286.4L1695.1,275.8L1695.6,269.0L1697.7,264.2ZM1695.6,262.1L1701.8,260.1L1712.2,258.7L1724.1,249.5L1716.3,243.8L1705.4,233.6L1703.4,248.1L1697.7,249.5L1695.6,256.6ZM1648.5,311.9L1653.7,316.3L1651.6,326.7L1647.5,329.7L1644.9,327.3L1641.8,317.5L1645.4,313.8ZM1656.8,317.5L1668.2,312.6L1667.7,310.1L1659.4,310.7L1654.2,314.4ZM1705.4,229.9L1713.7,223.9L1712.7,204.5L1718.9,206.9L1711.1,186.7L1712.2,162.6L1708.5,163.5L1705.9,182.5L1705.9,210.8ZM1597.3,363.2L1601.9,364.9L1599.9,373.4L1596.2,382.4L1592.6,376.2L1593.1,369.5ZM1533.1,397.3L1540.3,392.4L1545.5,395.1L1540.3,401.7L1533.6,401.2ZM1595.2,401.2L1603.5,401.2L1602.4,412.0L1600.4,420.1L1605.0,424.4L1612.8,431.8L1610.2,428.1L1597.3,426.5L1595.2,421.1L1591.1,413.1ZM1602.4,462.3L1607.6,454.5L1620.6,447.6L1626.3,460.7L1620.6,469.6L1612.8,464.9ZM1604.0,437.1L1610.2,444.0L1618.0,438.7L1620.6,446.6L1607.6,450.8L1602.4,444.0ZM1577.6,455.0L1589.5,439.2L1591.1,444.0L1579.7,457.1ZM1535.2,489.3L1538.3,488.8L1545.5,485.7L1555.9,482.0L1566.2,472.7L1571.4,467.5L1576.6,462.3L1584.3,469.1L1588.0,472.7L1581.8,476.3L1580.7,483.1L1586.4,493.4L1579.7,496.0L1576.1,505.3L1573.5,518.3L1564.2,519.3L1545.5,514.1L1540.9,509.0L1536.7,501.2ZM1464.3,469.6L1475.7,471.7L1490.2,485.7L1507.7,501.2L1511.9,511.5L1519.6,515.2L1519.1,528.7L1511.9,529.2L1500.5,519.3L1490.7,503.8L1481.9,489.8L1467.4,477.9ZM1515.5,533.9L1519.6,529.2L1531.6,531.3L1542.4,534.4L1554.3,534.4L1564.2,538.6L1563.1,543.8L1545.5,541.2L1530.0,539.1L1516.5,534.9ZM1563.6,540.7L1571.4,541.7L1586.9,541.2L1605.0,541.2L1607.6,543.3L1586.9,544.8L1574.0,545.4L1564.2,544.3ZM1610.2,552.2L1619.0,545.4L1629.9,542.2L1627.3,544.8L1615.4,550.6ZM1586.9,548.0L1596.2,550.1L1591.6,551.7ZM1589.5,527.1L1594.7,527.6L1594.7,514.1L1599.9,523.5L1607.6,521.9L1602.4,514.1L1599.9,506.4L1610.2,502.7L1619.0,490.8L1615.4,493.4L1597.3,491.9L1592.1,496.0L1589.5,501.2L1585.9,513.1ZM1649.0,506.4L1656.8,500.7L1666.1,503.8L1672.3,515.7L1685.2,507.4L1700.8,512.1L1718.9,518.3L1726.6,526.1L1736.0,531.3L1734.4,540.1L1747.3,552.2L1734.4,550.6L1725.6,540.1L1713.7,545.4L1700.8,545.9L1690.4,540.1L1684.7,526.1L1669.7,520.9L1659.4,519.3L1654.2,513.1ZM1633.5,514.1L1648.0,515.2L1646.4,517.8L1634.5,517.2ZM1630.9,489.3L1636.6,493.4L1633.5,498.6L1635.6,502.7L1630.4,500.7L1631.9,494.5ZM1739.6,527.1L1749.9,524.5L1758.7,520.4L1755.1,527.1L1742.2,530.7ZM531.7,382.4L546.8,375.1L567.4,379.0L587.1,391.8L570.0,393.5L557.1,383.0L541.6,381.8ZM586.1,394.0L603.7,393.5L617.6,400.6L603.7,405.5L585.6,402.2ZM565.9,401.7L576.8,403.9L572.6,405.5L565.9,402.8ZM623.3,401.2L631.6,402.2L630.6,404.4L623.3,403.9ZM664.2,217.8L681.3,202.9L683.9,185.8L696.8,206.9L698.9,218.6L693.7,225.4L681.3,217.8ZM82.0,66.3L88.8,71.0L98.1,72.1L92.9,75.5L83.6,72.1ZM1945.0,66.3L1951.8,71.0L1961.1,72.1L1955.9,75.5L1946.6,72.1ZM109.5,103.9L114.6,107.1L111.0,110.2L105.3,107.1ZM1972.5,103.9L1977.6,107.1L1974.0,110.2L1968.3,107.1ZM1035.3,285.1L1041.0,284.4L1051.8,283.7L1049.2,292.2L1046.1,294.2L1035.8,288.3ZM1013.5,264.9L1021.8,264.9L1020.8,277.8L1017.7,279.1L1014.6,279.1L1014.6,269.0ZM1019.2,251.7L1020.3,258.0L1018.7,262.8L1015.6,259.4L1015.6,254.5ZM1092.7,301.2L1107.2,303.1L1106.2,305.0L1098.9,305.7L1092.7,303.8ZM1138.3,304.4L1150.2,300.6L1147.0,305.7L1140.3,307.6ZM983.5,275.1L989.2,273.1L988.2,277.1L985.1,275.8Z" fill="#f2efe9" stroke="#f2efe9" stroke-width="1.5" stroke-linejoin="round"/><path d="M636.8,102.9L621.8,125.3L611.4,118.3L608.8,97.6L588.2,84.5L567.4,82.3L569.5,102.9L570.0,123.3L574.2,142.6L562.3,158.2L562.8,182.5L559.7,188.3L554.5,188.3L546.8,175.7L545.2,155.5L531.2,153.6L513.1,142.6L492.4,133.1L483.6,120.3L481.0,108.1L487.2,92.2L500.2,77.8L510.5,69.8L523.5,72.1L536.4,80.1L549.3,77.8L554.5,66.3L546.8,49.5L545.2,26.5L546.8,-8.5L557.1,-47.8L583.0,-47.8L580.4,-1.2L590.7,12.9L588.2,33.0L570.0,58.0L588.2,58.0L603.7,77.8L629.5,89.0L635.8,92.2ZM241.4,-10.0L262.1,-1.2L280.2,-8.5L303.5,-16.0L326.8,-7.0L350.1,-7.0L376.0,6.0L391.5,12.9L414.8,12.9L432.9,12.9L461.4,15.7L474.3,10.2L482.1,-8.5L505.3,6.0L526.0,6.0L526.0,-102.6L241.4,-102.6ZM1113.4,255.2L1116.0,248.1L1119.6,242.4L1124.8,235.8L1130.0,226.1L1136.7,225.4L1144.5,229.9L1139.3,234.3L1144.5,240.9L1152.2,238.7L1160.0,235.1L1165.2,239.5L1172.9,244.5L1186.4,261.5L1178.1,265.6L1167.8,266.3L1157.4,260.8L1152.7,258.7L1141.9,259.4L1131.5,264.2L1121.7,264.2L1116.0,261.5ZM1152.2,233.6L1154.8,226.1L1170.3,220.8L1167.8,227.6L1160.0,234.3ZM1213.3,240.2L1216.9,233.6L1224.7,226.1L1237.6,222.4L1245.4,229.9L1246.4,240.9L1235.0,240.9L1242.8,258.7L1248.0,262.1L1245.4,272.4L1250.5,285.7L1250.0,292.2L1235.0,294.2L1224.7,289.0L1224.7,282.4L1227.3,270.4L1222.1,260.1L1216.9,251.7ZM1273.8,229.9L1286.8,226.1L1289.4,240.9L1279.0,246.0L1272.8,238.7ZM1139.3,25.1L1151.2,31.7L1151.7,56.8L1160.0,63.9L1168.8,62.8L1165.7,53.2L1178.1,56.8L1182.2,48.2L1177.1,43.2L1185.9,35.6L1193.6,34.3L1200.9,10.2L1201.9,-16.0L1175.5,-16.0L1184.3,19.8L1179.1,35.6L1167.8,38.2L1154.8,34.3L1141.9,29.1ZM1167.8,-16.0L1172.9,7.4L1196.2,3.1L1211.7,15.7L1222.1,18.4L1245.4,7.4L1250.5,-16.0ZM1341.1,33.0L1348.9,29.1L1354.0,6.0L1359.2,-16.0L1346.3,-16.0L1343.7,12.9ZM1126.3,100.8L1131.5,108.1L1140.8,101.8L1141.9,94.4L1134.1,90.0L1128.9,94.4ZM1149.6,97.6L1156.4,95.5L1159.0,81.2L1153.8,76.7L1150.2,83.4ZM458.8,194.9L471.7,194.9L466.5,167.0L456.2,172.3ZM365.6,97.6L391.5,86.8L401.8,77.8L386.3,80.1L365.6,92.2ZM324.2,51.9L344.9,33.0L360.4,36.9L350.1,54.4L334.6,48.2ZM1136.7,503.8L1147.0,503.8L1147.0,513.1L1139.3,514.1L1134.6,509.0ZM1509.3,184.2L1522.2,178.3L1537.8,151.8L1535.2,149.1L1517.1,174.0L1508.3,182.5ZM1122.2,515.7L1126.3,516.7L1131.5,542.7L1128.9,543.8L1123.8,529.7ZM1147.0,548.0L1150.7,553.2L1153.3,573.4L1149.6,571.8L1148.1,558.5ZM494.5,223.9L510.5,214.7L526.0,209.3L533.3,226.1L520.9,226.1L502.8,225.4ZM516.7,258.7L519.8,260.8L528.6,237.3L532.3,231.4L520.9,231.4L515.7,240.9ZM533.8,230.6L549.3,229.9L558.1,238.7L548.3,249.5L544.2,251.7L539.0,244.5ZM540.0,260.8L562.8,252.4L561.2,255.2L549.3,262.1ZM558.1,249.5L577.3,243.1L576.2,248.8L562.3,250.2Z" fill="#b3d2dc"/><path d="" fill="#f2efe9"/><path d="M241.4,-10.0L241.4,105.0L251.8,108.1L259.5,118.3L269.9,110.2L280.2,123.3L293.2,142.6L298.3,148.2L295.8,159.1M333.0,206.9L478.4,206.9L478.4,203.7L480.5,204.5L507.4,214.7L533.8,226.1L544.7,235.1L544.2,251.7L541.1,258.7L562.3,254.5L562.0,250.9L575.2,247.4L584.5,237.3L601.1,237.3L604.7,234.3L608.8,224.6L613.0,218.9L618.2,219.7L620.2,222.0L620.2,232.1L624.4,237.3M365.1,320.6L377.5,319.4L396.7,327.9L411.2,327.9L411.2,324.9L420.0,324.9L430.3,338.1L437.6,341.7L441.7,336.3L448.4,336.9L456.2,350.5L468.1,359.5M494.0,422.7L494.0,418.5L496.0,414.2L503.3,414.2L503.3,405.0L509.7,405.0L514.1,401.2M509.7,405.0L509.5,415.2M504.8,426.5L509.0,423.3L513.1,425.4L516.7,428.6M519.3,431.3L526.0,426.0L531.2,422.7L540.5,420.1M527.6,440.3L538.0,441.8M541.6,454.5L542.1,449.2M568.0,460.7L571.6,453.9M602.1,437.1L595.9,441.3L593.3,450.8L595.9,459.7L608.8,462.3L621.8,466.5L620.2,475.3L622.8,488.2M660.6,454.5L657.0,471.7L653.4,472.7M675.1,468.0L670.9,490.8M691.7,469.1L691.1,486.7M622.8,488.2L625.4,492.4L639.9,488.2L650.2,476.8L660.6,471.7L662.7,477.9L665.8,491.4L678.7,488.2L691.7,486.7L702.0,487.2L704.1,476.8M622.8,488.2L609.4,492.9L612.0,504.3L608.8,520.4L593.3,534.9L596.4,550.6L606.3,555.9L611.4,555.9L633.2,549.6L642.5,563.8L658.0,570.2L660.6,584.1L669.4,584.1L673.0,593.3M615.1,555.9L611.4,579.8L611.4,590.6L618.2,611.5L624.4,619.8L616.6,632.3L610.4,661.5L608.3,679.7L606.3,698.5L602.6,724.8L600.1,759.9L595.9,782.5L596.9,806.4L614.0,816.4M624.4,619.8L647.1,616.5L655.4,623.8L670.9,635.1L688.5,635.7L692.7,643.8L682.3,650.8L673.0,662.7L668.9,679.7L668.9,685.9M647.1,616.5L652.8,604.3L669.4,603.2L673.0,593.3L669.9,605.4L683.9,618.2L688.5,626.6L688.5,635.7M673.0,662.7L681.8,667.5L694.2,676.6L694.8,684.0M555.5,516.2L564.9,521.9L580.4,506.4L581.9,499.1L562.8,491.4M581.9,499.1L593.3,511.5L608.8,520.4M606.8,595.2L611.4,590.6M961.8,304.4L962.3,317.5L952.5,329.7L926.1,343.4L926.1,349.3L902.8,349.3M926.1,351.7L926.1,359.2L909.0,359.2L909.0,373.4L903.8,376.2L903.3,385.7L883.1,385.7M926.1,349.3L946.3,364.9L977.3,387.4L992.8,397.3L1033.2,373.4L1022.8,366.1L1023.9,334.5L1030.6,316.9M946.3,364.9L943.7,412.5L911.6,417.4L908.0,422.2L884.2,428.1M1015.6,292.9L1013.5,311.3L1020.3,334.5M1100.5,326.1L1100.5,392.9L1095.3,395.7L1053.4,374.0L1043.5,378.5L1033.2,373.4M1100.5,381.8L1161.5,381.8M1051.3,376.2L1051.3,389.1L1041.0,425.4L1011.5,429.1L989.7,437.6L976.3,430.7L972.1,420.6L989.2,418.5L992.8,397.3M1095.3,395.7L1094.3,416.9L1083.9,433.4L1087.5,441.3L1110.8,448.7L1141.9,446.6L1147.0,451.8M1170.3,403.9L1160.0,423.8L1147.0,451.8L1152.2,470.1L1172.9,480.5L1187.9,477.9L1198.8,473.2L1219.0,457.1L1195.2,438.2M1183.3,507.4L1183.3,484.1L1187.9,477.9M1174.0,522.9L1147.0,503.8M1034.8,529.7L1053.9,529.2L1061.7,540.1L1082.4,536.5L1084.9,555.9L1095.3,555.9L1105.7,560.6L1121.2,563.3L1118.6,542.7L1128.9,541.7L1122.2,521.9L1124.3,505.3L1125.3,498.6L1131.5,486.7L1131.0,480.5L1112.9,472.7L1100.5,472.7L1087.5,476.8L1069.4,476.3L1067.4,480.5L1062.2,498.6L1056.5,506.4M1032.2,589.5L1041.0,587.9L1079.3,593.3L1091.7,591.1L1101.5,592.2M1079.8,595.0L1079.8,615.4L1074.6,615.4L1074.6,631.1M1056.5,653.2L1074.6,652.0L1074.6,631.1L1084.9,636.3L1103.6,635.1L1110.8,623.8L1123.2,616.5L1133.1,617.6M1136.7,642.6L1133.1,617.6L1141.9,601.5L1140.8,590.6L1128.4,580.3M1084.4,555.9L1095.3,566.5L1084.9,583.6L1091.7,591.1M911.6,462.8L927.1,459.2L932.3,454.5L929.7,444.0L914.2,436.0L908.0,422.2M956.6,472.7L955.6,446.6L942.6,444.0L943.7,412.5M976.3,430.7L978.9,449.2L977.3,467.0M985.1,465.4L989.7,437.6M1015.1,475.3L1025.4,462.3L1041.0,446.6L1046.1,433.4L1041.0,428.1M1046.1,433.4L1051.3,449.2L1067.4,457.1L1087.5,441.3M1021.8,487.2L1048.7,487.2L1054.9,487.2L1067.4,480.5M961.8,248.8L987.7,255.9M984.0,190.0L992.8,199.7L1004.2,202.9L1013.5,206.9L1010.4,217.8L1006.8,226.9L1007.3,230.6L1005.3,236.5L1009.9,246.0M1044.6,166.2L1046.7,177.4L1048.7,190.8M1002.2,184.2L1003.2,194.1L1004.2,202.9M1033.7,196.5L1042.5,208.5L1038.4,218.6L1022.8,218.6L1010.4,217.8M1048.7,190.8L1068.4,202.9L1088.1,206.1M1092.7,166.2L1094.8,176.5L1092.7,186.7L1095.8,193.2L1088.1,206.1M1117.0,145.4L1135.7,174.0L1144.5,179.9L1154.8,194.9L1178.1,202.1L1176.5,216.2L1169.3,221.6M1092.7,186.7L1128.9,188.3L1135.7,181.6M1117.0,145.4L1113.4,133.1L1116.0,113.3M1079.8,147.2L1108.8,150.0M1096.9,130.2L1112.9,132.1M1092.7,166.2L1108.8,150.0L1117.0,145.4M1088.1,213.9L1108.8,212.4L1123.8,234.3M1088.1,213.9L1079.8,227.6L1088.6,240.2L1119.1,246.0M1042.0,232.9L1056.5,226.1L1069.4,214.7L1088.1,213.9M1056.5,226.1L1072.0,233.6L1071.5,260.1M1088.6,240.2L1087.5,258.7L1077.2,265.6L1075.6,275.1M1087.5,258.7L1105.7,262.1L1116.0,258.7M1035.8,118.3L1034.2,97.6L1046.1,63.9L1064.2,6.0L1077.2,-2.6M1095.8,42.0L1079.8,-1.2M1116.0,101.8L1123.8,92.2L1134.1,76.7L1126.3,63.9L1126.3,26.5L1121.2,-1.2M925.6,258.7L937.5,260.8L934.9,275.1L932.8,290.9M1217.9,264.2L1224.7,226.1L1219.5,198.9L1237.6,186.7L1258.3,194.1L1289.4,190.8L1286.8,169.7L1310.1,160.0L1333.3,156.4L1368.5,165.3L1361.8,182.5L1385.1,192.4L1403.2,190.8L1422.9,206.1M1422.9,206.1L1436.8,194.9L1478.2,182.5L1498.9,188.3L1524.8,198.9L1555.9,200.5L1571.4,198.9L1589.5,171.4L1620.6,174.0L1633.5,202.9L1649.0,217.0L1667.1,212.4L1659.4,237.3L1650.1,238.7L1647.5,256.6M1422.9,206.1L1442.0,233.6L1467.9,253.8L1514.5,261.5L1545.5,248.1L1566.2,233.6L1589.5,222.4L1571.4,198.9M1422.9,206.1L1411.0,222.4L1398.0,235.8L1386.1,238.7L1386.1,257.3L1356.6,250.2L1335.9,258.7L1323.0,265.6L1312.7,252.4L1286.8,241.6L1260.9,237.3L1245.4,258.7M1250.0,290.3L1268.7,285.7L1286.8,295.5L1294.5,303.1L1304.9,297.4L1320.4,290.3L1338.5,283.7L1359.2,290.3M1386.1,257.3L1359.2,269.0L1358.2,290.3L1374.8,301.9L1379.9,320.6L1390.3,334.5L1426.5,348.1L1447.2,348.7L1474.6,346.4L1480.8,362.1L1475.7,371.2L1496.4,386.3L1509.3,377.9L1530.0,384.6M1358.2,290.3L1354.0,317.5L1357.2,329.7L1338.5,347.6L1335.9,360.9L1325.6,372.9M1341.1,295.5L1338.5,311.3L1330.8,326.1L1315.2,336.3L1286.8,336.9M1286.8,295.5L1289.4,326.7L1286.3,336.9L1297.1,353.4L1289.9,363.8M1202.9,274.4L1198.8,290.3L1209.2,304.4L1216.9,320.6L1222.1,336.3M1157.9,294.8L1189.5,290.9L1202.9,290.9M1189.5,290.9L1183.3,308.8L1172.9,321.8L1162.6,326.7L1154.8,320.6M1172.9,321.8L1202.4,340.5L1219.5,339.3M1192.6,412.5L1211.7,407.7L1240.2,398.4L1259.3,381.8L1258.3,373.4L1240.2,370.6M1151.7,338.7L1162.6,326.7M1202.9,274.4L1196.2,264.9L1178.1,248.1L1217.9,264.2M1475.7,371.2L1480.8,392.9L1481.9,413.6L1483.4,444.0M1496.4,386.3L1491.2,403.9L1511.9,406.6L1519.6,422.7L1527.4,414.7L1509.3,377.9M1501.5,436.0L1504.1,423.8L1519.6,422.7L1527.4,434.5L1514.5,444.0M1448.8,389.1L1449.8,364.9L1434.3,356.3L1426.5,348.1M1429.1,381.8L1431.7,359.2M1624.2,287.0L1635.6,281.8M1614.4,273.1L1633.5,258.7L1647.5,256.6M1538.3,488.8L1550.7,490.8L1566.2,483.1L1571.4,476.3L1580.7,477.4M1700.8,512.1L1700.8,545.9" fill="none" stroke="#dbcfd9" stroke-width="1.6" stroke-linejoin="round"/></svg><div class="r" style="left:182.5px;top:57.8px;width:72.8px;height:72.8px;border-radius:50%;background:rgba(253,156,115,0.6)"></div><div class="r" style="left:191.6px;top:66.9px;width:54.6px;height:54.6px;border-radius:50%;background:rgba(230,132,62,0.6);color:#222;font:21.8px 'Liberation Sans',sans-serif;line-height:57.6px;text-align:center">297</div><div class="r" style="left:327.6px;top:18.5px;width:72.8px;height:72.8px;border-radius:50%;background:rgba(241,211,87,0.6)"></div><div class="r" style="left:336.7px;top:27.6px;width:54.6px;height:54.6px;border-radius:50%;background:rgba(234,196,60,0.6);color:#222;font:21.8px 'Liberation Sans',sans-serif;line-height:57.6px;text-align:center">52</div><div class="r" style="left:637.3px;top:70.1px;width:72.8px;height:72.8px;border-radius:50%;background:rgba(241,211,87,0.6)"></div><div class="r" style="left:646.4px;top:79.2px;width:54.6px;height:54.6px;border-radius:50%;background:rgba(234,196,60,0.6);color:#222;font:21.8px 'Liberation Sans',sans-serif;line-height:57.6px;text-align:center">79</div><div class="r" style="left:452.1px;top:116.0px;width:72.8px;height:72.8px;border-radius:50%;background:rgba(241,211,87,0.6)"></div><div class="r" style="left:461.2px;top:125.1px;width:54.6px;height:54.6px;border-radius:50%;background:rgba(234,196,60,0.6);color:#222;font:21.8px 'Liberation Sans',sans-serif;line-height:57.6px;text-align:center">40</div><div class="r" style="left:892.9px;top:36.5px;width:72.8px;height:72.8px;border-radius:50%;background:rgba(241,211,87,0.6)"></div><div class="r" style="left:902.0px;top:45.6px;width:54.6px;height:54.6px;border-radius:50%;background:rgba(234,196,60,0.6);color:#222;font:21.8px 'Liberation Sans',sans-serif;line-height:57.6px;text-align:center">73</div><div class="r" style="left:1036.3px;top:18.5px;width:72.8px;height:72.8px;border-radius:50%;background:rgba(241,211,87,0.6)"></div><div class="r" style="left:1045.4px;top:27.6px;width:54.6px;height:54.6px;border-radius:50%;background:rgba(234,196,60,0.6);color:#222;font:21.8px 'Liberation Sans',sans-serif;line-height:57.6px;text-align:center">15</div><div class="r" style="left:977.3px;top:172.5px;width:72.8px;height:72.8px;border-radius:50%;background:rgba(253,156,115,0.6)"></div><div class="r" style="left:986.4px;top:181.6px;width:54.6px;height:54.6px;border-radius:50%;background:rgba(230,132,62,0.6);color:#222;font:21.8px 'Liberation Sans',sans-serif;line-height:57.6px;text-align:center">650</div><div class="r" style="left:318.6px;top:210.2px;width:72.8px;height:72.8px;border-radius:50%;background:rgba(253,156,115,0.6)"></div><div class="r" style="left:327.7px;top:219.3px;width:54.6px;height:54.6px;border-radius:50%;background:rgba(230,132,62,0.6);color:#222;font:21.8px 'Liberation Sans',sans-serif;line-height:57.6px;text-align:center">1036</div><div class="r" style="left:474.2px;top:247.1px;width:72.8px;height:72.8px;border-radius:50%;background:rgba(253,156,115,0.6)"></div><div class="r" style="left:483.3px;top:256.2px;width:54.6px;height:54.6px;border-radius:50%;background:rgba(230,132,62,0.6);color:#222;font:21.8px 'Liberation Sans',sans-serif;line-height:57.6px;text-align:center">5740</div><div class="r" style="left:1387.0px;top:209.4px;width:72.8px;height:72.8px;border-radius:50%;background:rgba(241,211,87,0.6)"></div><div class="r" style="left:1396.1px;top:218.5px;width:54.6px;height:54.6px;border-radius:50%;background:rgba(234,196,60,0.6);color:#222;font:21.8px 'Liberation Sans',sans-serif;line-height:57.6px;text-align:center">11</div><div class="r" style="left:1564.8px;top:286.4px;width:72.8px;height:72.8px;border-radius:50%;background:rgba(253,156,115,0.6)"></div><div class="r" style="left:1573.9px;top:295.5px;width:54.6px;height:54.6px;border-radius:50%;background:rgba(230,132,62,0.6);color:#222;font:21.8px 'Liberation Sans',sans-serif;line-height:57.6px;text-align:center">165</div><div class="r" style="left:1636.1px;top:260.2px;width:72.8px;height:72.8px;border-radius:50%;background:rgba(253,156,115,0.6)"></div><div class="r" style="left:1645.2px;top:269.3px;width:54.6px;height:54.6px;border-radius:50%;background:rgba(230,132,62,0.6);color:#222;font:21.8px 'Liberation Sans',sans-serif;line-height:57.6px;text-align:center">114</div><div class="r" style="left:113.7px;top:350.3px;width:72.8px;height:72.8px;border-radius:50%;background:rgba(181,226,140,0.6)"></div><div class="r" style="left:122.8px;top:359.4px;width:54.6px;height:54.6px;border-radius:50%;background:rgba(120,200,80,0.6);color:#222;font:21.8px 'Liberation Sans',sans-serif;line-height:57.6px;text-align:center">5</div><div class="r" style="left:863.4px;top:328.2px;width:72.8px;height:72.8px;border-radius:50%;background:rgba(181,226,140,0.6)"></div><div class="r" style="left:872.5px;top:337.3px;width:54.6px;height:54.6px;border-radius:50%;background:rgba(120,200,80,0.6);color:#222;font:21.8px 'Liberation Sans',sans-serif;line-height:57.6px;text-align:center">5</div><div class="r" style="left:1156.7px;top:366.7px;width:72.8px;height:72.8px;border-radius:50%;background:rgba(253,156,115,0.6)"></div><div class="r" style="left:1165.8px;top:375.8px;width:54.6px;height:54.6px;border-radius:50%;background:rgba(230,132,62,0.6);color:#222;font:21.8px 'Liberation Sans',sans-serif;line-height:57.6px;text-align:center">171</div><div class="r" style="left:1332.1px;top:386.3px;width:72.8px;height:72.8px;border-radius:50%;background:rgba(181,226,140,0.6)"></div><div class="r" style="left:1341.2px;top:395.4px;width:54.6px;height:54.6px;border-radius:50%;background:rgba(120,200,80,0.6);color:#222;font:21.8px 'Liberation Sans',sans-serif;line-height:57.6px;text-align:center">6</div><div class="r" style="left:1817.1px;top:416.6px;width:72.8px;height:72.8px;border-radius:50%;background:rgba(181,226,140,0.6)"></div><div class="r" style="left:1826.2px;top:425.7px;width:54.6px;height:54.6px;border-radius:50%;background:rgba(120,200,80,0.6);color:#222;font:21.8px 'Liberation Sans',sans-serif;line-height:57.6px;text-align:center">2</div><div class="r" style="left:554.5px;top:428.9px;width:72.8px;height:72.8px;border-radius:50%;background:rgba(241,211,87,0.6)"></div><div class="r" style="left:563.6px;top:438.0px;width:54.6px;height:54.6px;border-radius:50%;background:rgba(234,196,60,0.6);color:#222;font:21.8px 'Liberation Sans',sans-serif;line-height:57.6px;text-align:center">13</div><div class="r" style="left:987.9px;top:438.0px;width:72.8px;height:72.8px;border-radius:50%;background:rgba(253,156,115,0.6)"></div><div class="r" style="left:997.0px;top:447.1px;width:54.6px;height:54.6px;border-radius:50%;background:rgba(230,132,62,0.6);color:#222;font:21.8px 'Liberation Sans',sans-serif;line-height:57.6px;text-align:center">111</div><div class="r" style="left:752.0px;top:507.6px;width:72.8px;height:72.8px;border-radius:50%;background:rgba(241,211,87,0.6)"></div><div class="r" style="left:761.1px;top:516.7px;width:54.6px;height:54.6px;border-radius:50%;background:rgba(234,196,60,0.6);color:#222;font:21.8px 'Liberation Sans',sans-serif;line-height:57.6px;text-align:center">13</div><div class="r" style="left:1692.6px;top:521.6px;width:72.8px;height:72.8px;border-radius:50%;background:rgba(253,156,115,0.6)"></div><div class="r" style="left:1701.7px;top:530.7px;width:54.6px;height:54.6px;border-radius:50%;background:rgba(230,132,62,0.6);color:#222;font:21.8px 'Liberation Sans',sans-serif;line-height:57.6px;text-align:center">267</div><div class="r" style="left:652.8px;top:578.9px;width:72.8px;height:72.8px;border-radius:50%;background:rgba(253,156,115,0.6)"></div><div class="r" style="left:661.9px;top:588.0px;width:54.6px;height:54.6px;border-radius:50%;background:rgba(230,132,62,0.6);color:#222;font:21.8px 'Liberation Sans',sans-serif;line-height:57.6px;text-align:center">882</div><div class="r" style="left:1078.1px;top:568.2px;width:72.8px;height:72.8px;border-radius:50%;background:rgba(253,156,115,0.6)"></div><div class="r" style="left:1087.2px;top:577.3px;width:54.6px;height:54.6px;border-radius:50%;background:rgba(230,132,62,0.6);color:#222;font:21.8px 'Liberation Sans',sans-serif;line-height:57.6px;text-align:center">169</div><div class="r" style="left:1544.3px;top:629.7px;width:72.8px;height:72.8px;border-radius:50%;background:rgba(241,211,87,0.6)"></div><div class="r" style="left:1553.4px;top:638.8px;width:54.6px;height:54.6px;border-radius:50%;background:rgba(234,196,60,0.6);color:#222;font:21.8px 'Liberation Sans',sans-serif;line-height:57.6px;text-align:center">24</div><div class="r" style="left:1681.9px;top:673.9px;width:72.8px;height:72.8px;border-radius:50%;background:rgba(241,211,87,0.6)"></div><div class="r" style="left:1691.0px;top:683.0px;width:54.6px;height:54.6px;border-radius:50%;background:rgba(234,196,60,0.6);color:#222;font:21.8px 'Liberation Sans',sans-serif;line-height:57.6px;text-align:center">10</div><div class="r" style="left:585.6px;top:763.2px;width:72.8px;height:72.8px;border-radius:50%;background:rgba(241,211,87,0.6)"></div><div class="r" style="left:594.7px;top:772.3px;width:54.6px;height:54.6px;border-radius:50%;background:rgba(234,196,60,0.6);color:#222;font:21.8px 'Liberation Sans',sans-serif;line-height:57.6px;text-align:center">36</div><div class="r" style="left:1891.3px;top:585.1px;width:8px;height:8px;border-radius:50%;background:#111"></div><div class="r" style="left:18.6px;top:18.4px;width:62px;height:117px;border-radius:7px;background:rgba(0,0,0,0.2)"></div><div class="r" style="left:22.0px;top:21.7px;width:55.3px;height:54.3px;border-radius:5px 5px 0 0;background:#fff"></div><div class="r" style="left:22.0px;top:76.0px;width:55.3px;height:1.5px;background:#ccc"></div><div class="r" style="left:22.0px;top:77.5px;width:55.3px;height:54.4px;border-radius:0 0 5px 5px;background:#f4f4f4"></div><div class="r" style="left:39.0px;top:51.3px;width:23.2px;height:4.6px;background:#000"></div><div class="r" style="left:48.3px;top:42.0px;width:4.6px;height:23.2px;background:#000"></div><div class="r" style="left:39.0px;top:106.3px;width:23.2px;height:4.5px;background:#bbb"></div><div class="r" style="left:1614.3px;top:809.1px;width:384.5px;height:27.4px;background:rgba(255,255,255,0.8)"></div><div class="r" style="left:1623.9px;top:816.6px;width:19px;height:6px;background:#4c7be0"></div><div class="r" style="left:1623.9px;top:822.6px;width:19px;height:6px;background:#f5d64a"></div></div>
<div class="r" style="left:3207.0px;top:1110.0px;width:1.6px;height:18.0px;background:#333"></div>
<div class="r" style="left:2459.8px;top:1168.0px;width:65.6px;height:2.0px;background:#e0e0e0;border-radius:1px"></div>
<div class="r" style="left:2459.8px;top:1175.3px;width:65.6px;height:2.0px;background:#e0e0e0;border-radius:1px"></div>
<svg class="r" style="left:3486px;top:1208px" width="22" height="14" viewBox="0 0 22 14"><path d="M2 12L11 3l9 9" fill="none" stroke="#666" stroke-width="3.6"/></svg>
<div class="r" style="left:1467.0px;top:1262.5px;width:2051.0px;height:2.0px;background:#e8e8e8"></div>
<div class="r" style="left:1466.9px;top:1260.2px;width:97.0px;height:4.0px;background:#454e7c"></div>
<div class="r" style="left:1467.4px;top:1294.5px;width:365.0px;height:60.5px;border:2px solid #dcdcdc;border-radius:7px;box-sizing:border-box"></div>
<svg class="r" style="left:1495px;top:1309px" width="33" height="33" viewBox="0 0 33 33"><g fill="none" stroke="#666" stroke-width="4"><circle cx="14" cy="14" r="11"/><path d="M22 22l8.5 8.5"/></g></svg>
<div class="r" style="left:3343.4px;top:1304.3px;width:131.1px;height:41.6px;background:#efefef;border-radius:21px"></div>
<svg class="r" style="left:3491px;top:1309px" width="26" height="31" viewBox="0 0 26 31"><g fill="none" stroke="#555" stroke-width="2.2"><path d="M8 3.5V1.2h16.8v25H21"/><path d="M2 6.5h17v23H8l-6-6z"/><path d="M2 23.5h6v6"/></g></svg>
<svg class="r" style="left:1644.6px;top:1398.0px" width="11" height="18" viewBox="0 0 11 18"><path d="M5.5 1L10 7H1z M5.5 17L10 11H1z" fill="#cfcfcf"/></svg>
<svg class="r" style="left:2686.7px;top:1398.0px" width="11" height="18" viewBox="0 0 11 18"><path d="M5.5 1L10 7H1z M5.5 17L10 11H1z" fill="#cfcfcf"/></svg>
<div class="r" style="left:1467.0px;top:1428.7px;width:2051.0px;height:3.7px;background:#e3e3e3"></div>
<div class="r" style="left:1467.0px;top:1483.3px;width:2051.0px;height:2.0px;background:#e6e6e6"></div>
<div class="r" style="left:1467.0px;top:1535.3px;width:2051.0px;height:2.0px;background:#e6e6e6"></div>
<div class="r" style="left:1467.0px;top:1587.3px;width:2051.0px;height:2.0px;background:#e6e6e6"></div>
<div class="r" style="left:1467.0px;top:1639.3px;width:2051.0px;height:2.0px;background:#e6e6e6"></div>
<div class="r" style="left:1467.0px;top:1691.3px;width:2051.0px;height:2.0px;background:#e6e6e6"></div>
<div class="t" id="tf77c823879" style="left:332.6px;top:115.7px;font-size:42.30px;color:#323232;font-weight:700;font-family:'Liberation Sans', sans-serif;letter-spacing:-1.754px;">Map of Airports</div>
<div class="t" id="t448f1dfeef" style="left:762.3px;top:124.6px;font-size:22.82px;color:#6a6a6a;font-weight:400;font-family:'Liberation Sans', sans-serif;letter-spacing:0.147px;">Added to 1 dashboard</div>
<div class="t" id="t5d33d20b90" style="left:1064.5px;top:124.6px;font-size:22.82px;color:#6a6a6a;font-weight:400;font-family:'Liberation Sans', sans-serif;letter-spacing:0.189px;">Superset Admin</div>
<div class="t" id="tca81acabcc" style="left:1302.7px;top:124.6px;font-size:22.82px;color:#6a6a6a;font-weight:400;font-family:'Liberation Sans', sans-serif;letter-spacing:0.166px;">2 minutes ago</div>
<div class="t" id="t6f06c71b11" style="left:3355.5px;top:124.4px;font-size:23.84px;color:#2f6178;font-weight:700;font-family:'Liberation Sans', sans-serif;letter-spacing:-2.308px;">SAVE</div>
<div class="t" id="t1c2a203382" style="left:331.4px;top:216.3px;font-size:26.02px;color:#333;font-weight:400;font-family:'Liberation Sans', sans-serif;letter-spacing:0.474px;">Chart Source</div>
<div class="t" id="ta38e62f959" style="left:510.8px;top:295.2px;font-size:27.18px;color:#333;font-weight:400;font-family:'Liberation Sans', sans-serif;letter-spacing:-0.056px;">Airports_full</div>
<div class="t" id="t8d0091b22e" style="left:353.2px;top:404.3px;font-size:26.60px;color:#bdbdbd;font-weight:400;font-family:'Liberation Sans', sans-serif;letter-spacing:0.057px;">Search Metrics &amp; Columns</div>
<div class="t" id="t3bf6897176" style="left:330.7px;top:488.8px;font-size:28.05px;color:#333;font-weight:400;font-family:'Liberation Sans', sans-serif;letter-spacing:-0.179px;">Metrics</div>
<div class="t" id="tc8ef95b882" style="left:330.7px;top:571.8px;font-size:24.71px;color:#b0b0b0;font-weight:400;font-family:'Liberation Sans', sans-serif;letter-spacing:-1.218px;">Showing 1 of 1</div>
<div class="t" id="tf1bb0623dc" style="left:341.6px;top:625.4px;font-size:25.00px;color:#333;font-weight:400;font-family:'Liberation Serif', serif;letter-spacing:0.000px;"><i>f</i>(x)</div>
<div class="t" id="t66693c9b3f" style="left:390.0px;top:625.3px;font-size:25.15px;color:#333;font-weight:400;font-family:'Liberation Sans', sans-serif;letter-spacing:-1.703px;">COUNT(*)</div>
<div class="t" id="t91f32aa4ee" style="left:330.7px;top:710.5px;font-size:28.05px;color:#333;font-weight:400;font-family:'Liberation Sans', sans-serif;letter-spacing:-1.062px;">Columns</div>
<div class="t" id="t80bd12a989" style="left:330.7px;top:793.1px;font-size:24.42px;color:#b0b0b0;font-weight:400;font-family:'Liberation Sans', sans-serif;letter-spacing:-0.855px;">Showing 14 of 14</div>
<div class="t" id="tb2e4566f39" style="left:352.5px;top:847.4px;font-size:23.69px;color:#333;font-weight:400;font-family:'Liberation Sans', sans-serif;letter-spacing:1.312px;">?</div>
<div class="t" id="t8b242ee75b" style="left:389.4px;top:847.4px;font-size:23.69px;color:#333;font-weight:400;font-family:'Liberation Sans', sans-serif;letter-spacing:-1.637px;">id</div>
<div class="t" id="te7b6d59a99" style="left:344.2px;top:907.7px;font-size:21.81px;color:#333;font-weight:400;font-family:'Liberation Sans', sans-serif;letter-spacing:-1.978px;">abc</div>
<div class="t" id="t760a24ff85" style="left:389.4px;top:906.1px;font-size:23.69px;color:#333;font-weight:400;font-family:'Liberation Sans', sans-serif;letter-spacing:-0.094px;">ident</div>
<div class="t" id="t46bd9adc44" style="left:344.2px;top:966.3px;font-size:21.81px;color:#333;font-weight:400;font-family:'Liberation Sans', sans-serif;letter-spacing:-1.978px;">abc</div>
<div class="t" id="t9620dfa20e" style="left:389.4px;top:964.7px;font-size:23.69px;color:#333;font-weight:400;font-family:'Liberation Sans', sans-serif;letter-spacing:0.073px;">type</div>
<div class="t" id="t26fadd53b5" style="left:344.2px;top:1024.9px;font-size:21.81px;color:#333;font-weight:400;font-family:'Liberation Sans', sans-serif;letter-spacing:-1.978px;">abc</div>
<div class="t" id="tec20822c37" style="left:389.4px;top:1023.3px;font-size:23.69px;color:#333;font-weight:400;font-family:'Liberation Sans', sans-serif;letter-spacing:-1.089px;">name</div>
<div class="t" id="t8b9645c0a4" style="left:352.5px;top:1081.9px;font-size:23.69px;color:#333;font-weight:400;font-family:'Liberation Sans', sans-serif;letter-spacing:1.312px;">?</div>
<div class="t" id="te1dc145e15" style="left:389.4px;top:1081.9px;font-size:23.69px;color:#333;font-weight:400;font-family:'Liberation Sans', sans-serif;letter-spacing:-0.227px;">latitude_deg</div>
<div class="t" id="ted94dd0bab" style="left:352.5px;top:1140.5px;font-size:23.69px;color:#333;font-weight:400;font-family:'Liberation Sans', sans-serif;letter-spacing:1.312px;">?</div>
<div class="t" id="tda9887e30e" style="left:389.4px;top:1140.5px;font-size:23.69px;color:#333;font-weight:400;font-family:'Liberation Sans', sans-serif;letter-spacing:-0.255px;">longitude_deg</div>
<div class="t" id="tc0fa277bdc" style="left:352.5px;top:1199.2px;font-size:23.69px;color:#333;font-weight:400;font-family:'Liberation Sans', sans-serif;letter-spacing:1.312px;">?</div>
<div class="t" id="te8d2fe07c0" style="left:389.4px;top:1199.2px;font-size:23.69px;color:#333;font-weight:400;font-family:'Liberation Sans', sans-serif;letter-spacing:-0.232px;">elevation_ft</div>
<div class="t" id="ta18e7078a8" style="left:344.2px;top:1259.4px;font-size:21.81px;color:#333;font-weight:400;font-family:'Liberation Sans', sans-serif;letter-spacing:-1.978px;">abc</div>
<div class="t" id="t9ede7712d5" style="left:389.4px;top:1257.8px;font-size:23.69px;color:#333;font-weight:400;font-family:'Liberation Sans', sans-serif;letter-spacing:0.057px;">continent</div>
<div class="t" id="te5ca191e36" style="left:344.2px;top:1318.0px;font-size:21.81px;color:#333;font-weight:400;font-family:'Liberation Sans', sans-serif;letter-spacing:-1.978px;">abc</div>
<div class="t" id="t82073644cb" style="left:389.4px;top:1316.4px;font-size:23.69px;color:#333;font-weight:400;font-family:'Liberation Sans', sans-serif;letter-spacing:-0.324px;">iso_country</div>
<div class="t" id="tcaeaef1939" style="left:344.2px;top:1376.6px;font-size:21.81px;color:#333;font-weight:400;font-family:'Liberation Sans', sans-serif;letter-spacing:-1.978px;">abc</div>
<div class="t" id="tfd44d099f9" style="left:389.4px;top:1375.0px;font-size:23.69px;color:#333;font-weight:400;font-family:'Liberation Sans', sans-serif;letter-spacing:-0.524px;">iso_region</div>
<div class="t" id="t90b89dac3d" style="left:344.2px;top:1435.2px;font-size:21.81px;color:#333;font-weight:400;font-family:'Liberation Sans', sans-serif;letter-spacing:-1.978px;">abc</div>
<div class="t" id="t43d883c63d" style="left:389.4px;top:1433.6px;font-size:23.69px;color:#333;font-weight:400;font-family:'Liberation Sans', sans-serif;letter-spacing:-0.105px;">municipality</div>
<div class="t" id="t311b0c3879" style="left:344.2px;top:1493.9px;font-size:21.81px;color:#333;font-weight:400;font-family:'Liberation Sans', sans-serif;letter-spacing:-1.978px;">abc</div>
<div class="t" id="t8b8a3da698" style="left:389.4px;top:1492.3px;font-size:23.69px;color:#333;font-weight:400;font-family:'Liberation Sans', sans-serif;letter-spacing:-0.244px;">scheduled_service</div>
<div class="t" id="tf71e2ccb13" style="left:344.2px;top:1552.5px;font-size:21.81px;color:#333;font-weight:400;font-family:'Liberation Sans', sans-serif;letter-spacing:-1.978px;">abc</div>
<div class="t" id="t2e7acffe99" style="left:389.4px;top:1550.9px;font-size:23.69px;color:#333;font-weight:400;font-family:'Liberation Sans', sans-serif;letter-spacing:-0.591px;">gps_code</div>
<div class="t" id="t0add3b3c7f" style="left:344.2px;top:1611.1px;font-size:21.81px;color:#333;font-weight:400;font-family:'Liberation Sans', sans-serif;letter-spacing:-1.978px;">abc</div>
<div class="t" id="td26017bffc" style="left:389.4px;top:1609.5px;font-size:23.69px;color:#333;font-weight:400;font-family:'Liberation Sans', sans-serif;letter-spacing:-0.441px;">local_code</div>
<div class="t" id="t2baaba2efe" style="left:939.9px;top:224.8px;font-size:22.67px;color:#222;font-weight:400;font-family:'Liberation Sans', sans-serif;letter-spacing:-0.854px;">DATA</div>
<div class="t" id="t36eb3c1abe" style="left:924.0px;top:337.2px;font-size:22.82px;color:#666;font-weight:700;font-family:'Liberation Sans', sans-serif;letter-spacing:-0.836px;">SCATTER MAP</div>
<div class="t" id="tf1a5963c76" style="left:1317.0px;top:336.2px;font-size:26.45px;color:#666;font-weight:400;font-family:'Liberation Sans', sans-serif;letter-spacing:1.062px;">4k</div>
<div class="t" id="tda0f33c836" style="left:1254.9px;top:398.7px;font-size:23.40px;color:#666;font-weight:400;font-family:'Liberation Sans', sans-serif;letter-spacing:0.052px;">View all charts</div>
<div class="t" id="t2ae538260d" style="left:880.2px;top:483.5px;font-size:26.45px;color:#222;font-weight:400;font-family:'Liberation Sans', sans-serif;letter-spacing:-0.100px;">Query</div>
<div class="t" id="t5bde68f944" style="left:880.2px;top:564.7px;font-size:23.40px;color:#666;font-weight:400;font-family:'Liberation Sans', sans-serif;letter-spacing:-1.053px;">LONGITUDE &amp; LATITUDE</div>
<div class="t" id="t84417eeb56" style="left:898.9px;top:606.2px;font-size:23.84px;color:#333;font-weight:400;font-family:'Liberation Sans', sans-serif;letter-spacing:-0.353px;">longitude_deg</div>
<div class="t" id="t282f37a873" style="left:1065.6px;top:606.2px;font-size:23.84px;color:#333;font-weight:400;font-family:'Liberation Sans', sans-serif;letter-spacing:-0.333px;">latitude_deg</div>
<div class="t" id="tfcc8df8c13" style="left:880.2px;top:682.6px;font-size:23.98px;color:#666;font-weight:400;font-family:'Liberation Sans', sans-serif;letter-spacing:-1.606px;">POINT SIZE</div>
<div class="t" id="t493d3709b0" style="left:898.9px;top:724.8px;font-size:22.50px;color:#333;font-weight:400;font-family:'Liberation Sans', sans-serif;letter-spacing:0.000px;">10</div>
<div class="t" id="tc73149dd75" style="left:879.6px;top:814.7px;font-size:24.56px;color:#666;font-weight:400;font-family:'Liberation Sans', sans-serif;letter-spacing:-2.654px;">FILTERS</div>
<div class="t" id="t72e8bd077b" style="left:942.3px;top:866.7px;font-size:24.42px;color:#bdbdbd;font-weight:400;font-family:'Liberation Sans', sans-serif;letter-spacing:-0.468px;">Drop columns/metrics here or click</div>
<div class="t" id="t63b104d644" style="left:879.6px;top:945.2px;font-size:23.84px;color:#666;font-weight:400;font-family:'Liberation Sans', sans-serif;letter-spacing:-1.506px;">ROW LIMIT</div>
<div class="t" id="tb01458d4e2" style="left:901.7px;top:994.6px;font-size:26.89px;color:#222;font-weight:400;font-family:'Liberation Sans', sans-serif;letter-spacing:-0.009px;">10000</div>
<div class="t" id="t7bd7d90de2" style="left:879.6px;top:1071.5px;font-size:23.55px;color:#666;font-weight:400;font-family:'Liberation Sans', sans-serif;letter-spacing:-1.692px;">TARGET COLOR</div>
<div class="t" id="t648fbaceae" style="left:3020.0px;top:233.5px;font-size:22.09px;color:#fff;font-weight:400;font-family:'Liberation Sans', sans-serif;letter-spacing:0.292px;">10k rows</div>
<div class="t" id="t66ed2a60fb" style="left:3165.9px;top:233.5px;font-size:22.09px;color:#333;font-weight:400;font-family:'Liberation Sans', sans-serif;letter-spacing:0.298px;">Cached</div>
<div class="t" id="t260285e115" style="left:3327.8px;top:232.7px;font-size:23.08px;color:#fff;font-weight:400;font-family:'Liberation Mono', monospace;letter-spacing:-0.994px;">00:00:00.15</div>
<div class="t" id="tca5dc64815" style="left:3143.3px;top:1108.5px;font-size:19.19px;color:#3a78a8;font-weight:400;font-family:'Liberation Sans', sans-serif;letter-spacing:-0.235px;">Leaflet</div>
<div class="t" id="t69354462ac" style="left:3215.4px;top:1108.6px;font-size:19.00px;color:#333;font-weight:400;font-family:'Liberation Sans', sans-serif;letter-spacing:0.000px;">&copy;</div>
<div class="t" id="t6fe8b68f7f" style="left:3236.0px;top:1108.5px;font-size:19.19px;color:#3a78a8;font-weight:400;font-family:'Liberation Sans', sans-serif;letter-spacing:0.044px;">OpenStreetMap</div>
<div class="t" id="te6e2f45168" style="left:3377.8px;top:1108.5px;font-size:19.19px;color:#333;font-weight:400;font-family:'Liberation Sans', sans-serif;letter-spacing:0.286px;">contributors</div>
<div class="t" id="t54df922ae0" style="left:1467.4px;top:1213.5px;font-size:23.26px;color:#222;font-weight:400;font-family:'Liberation Sans', sans-serif;letter-spacing:-1.736px;">RESULTS</div>
<div class="t" id="t1e25facf82" style="left:1622.5px;top:1213.5px;font-size:23.26px;color:#222;font-weight:400;font-family:'Liberation Sans', sans-serif;letter-spacing:-1.524px;">SAMPLES</div>
<div class="t" id="tcdf3529496" style="left:1541.2px;top:1311.7px;font-size:26.02px;color:#bdbdbd;font-weight:400;font-family:'Liberation Sans', sans-serif;letter-spacing:0.032px;">Search</div>
<div class="t" id="tdc07c16392" style="left:3363.9px;top:1313.6px;font-size:22.09px;color:#333;font-weight:400;font-family:'Liberation Sans', sans-serif;letter-spacing:0.320px;">10k rows</div>
<div class="t" id="tdf098a500f" style="left:1496.7px;top:1396.3px;font-size:21.37px;color:#222;font-weight:700;font-family:'Liberation Sans', sans-serif;letter-spacing:0.435px;">latitude_deg</div>
<div class="t" id="t988290c297" style="left:2519.6px;top:1396.3px;font-size:21.37px;color:#222;font-weight:700;font-family:'Liberation Sans', sans-serif;letter-spacing:0.346px;">longitude_deg</div>
<div class="t" id="t163a95ea8a" style="left:1496.9px;top:1444.8px;font-size:23.11px;color:#333;font-weight:400;font-family:'Liberation Sans', sans-serif;letter-spacing:0.140px;">34.8647994995117</div>
<div class="t" id="t5a31e1b405" style="left:2520.5px;top:1444.8px;font-size:23.11px;color:#333;font-weight:400;font-family:'Liberation Sans', sans-serif;letter-spacing:0.025px;">-86.7703018188477</div>
<div class="t" id="t89503a9ecb" style="left:1496.9px;top:1496.8px;font-size:23.11px;color:#333;font-weight:400;font-family:'Liberation Sans', sans-serif;letter-spacing:-0.427px;">38.7570991516113</div>
<div class="t" id="tc048d3555f" style="left:2520.5px;top:1496.8px;font-size:23.11px;color:#333;font-weight:400;font-family:'Liberation Sans', sans-serif;letter-spacing:0.343px;">-75.7537994384766</div>
<div class="t" id="t941f3b0bfb" style="left:1496.9px;top:1548.8px;font-size:23.11px;color:#333;font-weight:400;font-family:'Liberation Sans', sans-serif;letter-spacing:-0.474px;">41.2995</div>
<div class="t" id="t912b377e5f" style="left:2520.5px;top:1548.8px;font-size:23.11px;color:#333;font-weight:400;font-family:'Liberation Sans', sans-serif;letter-spacing:-0.620px;">-80.211111</div>
<div class="t" id="tad07806202" style="left:1496.9px;top:1600.8px;font-size:23.11px;color:#333;font-weight:400;font-family:'Liberation Sans', sans-serif;letter-spacing:0.226px;">32.8269</div>
<div class="t" id="tad9be48b9d" style="left:2520.5px;top:1600.8px;font-size:23.11px;color:#333;font-weight:400;font-family:'Liberation Sans', sans-serif;letter-spacing:-0.249px;">-97.305801</div>
<div class="t" id="t23343e01fa" style="left:1496.9px;top:1652.8px;font-size:23.11px;color:#333;font-weight:400;font-family:'Liberation Sans', sans-serif;letter-spacing:-0.240px;">32.6076011657715</div>
<div class="t" id="t49adc90a79" style="left:2520.5px;top:1652.8px;font-size:23.11px;color:#333;font-weight:400;font-family:'Liberation Sans', sans-serif;letter-spacing:-0.150px;">-97.2419967651367</div>
</body></html>
